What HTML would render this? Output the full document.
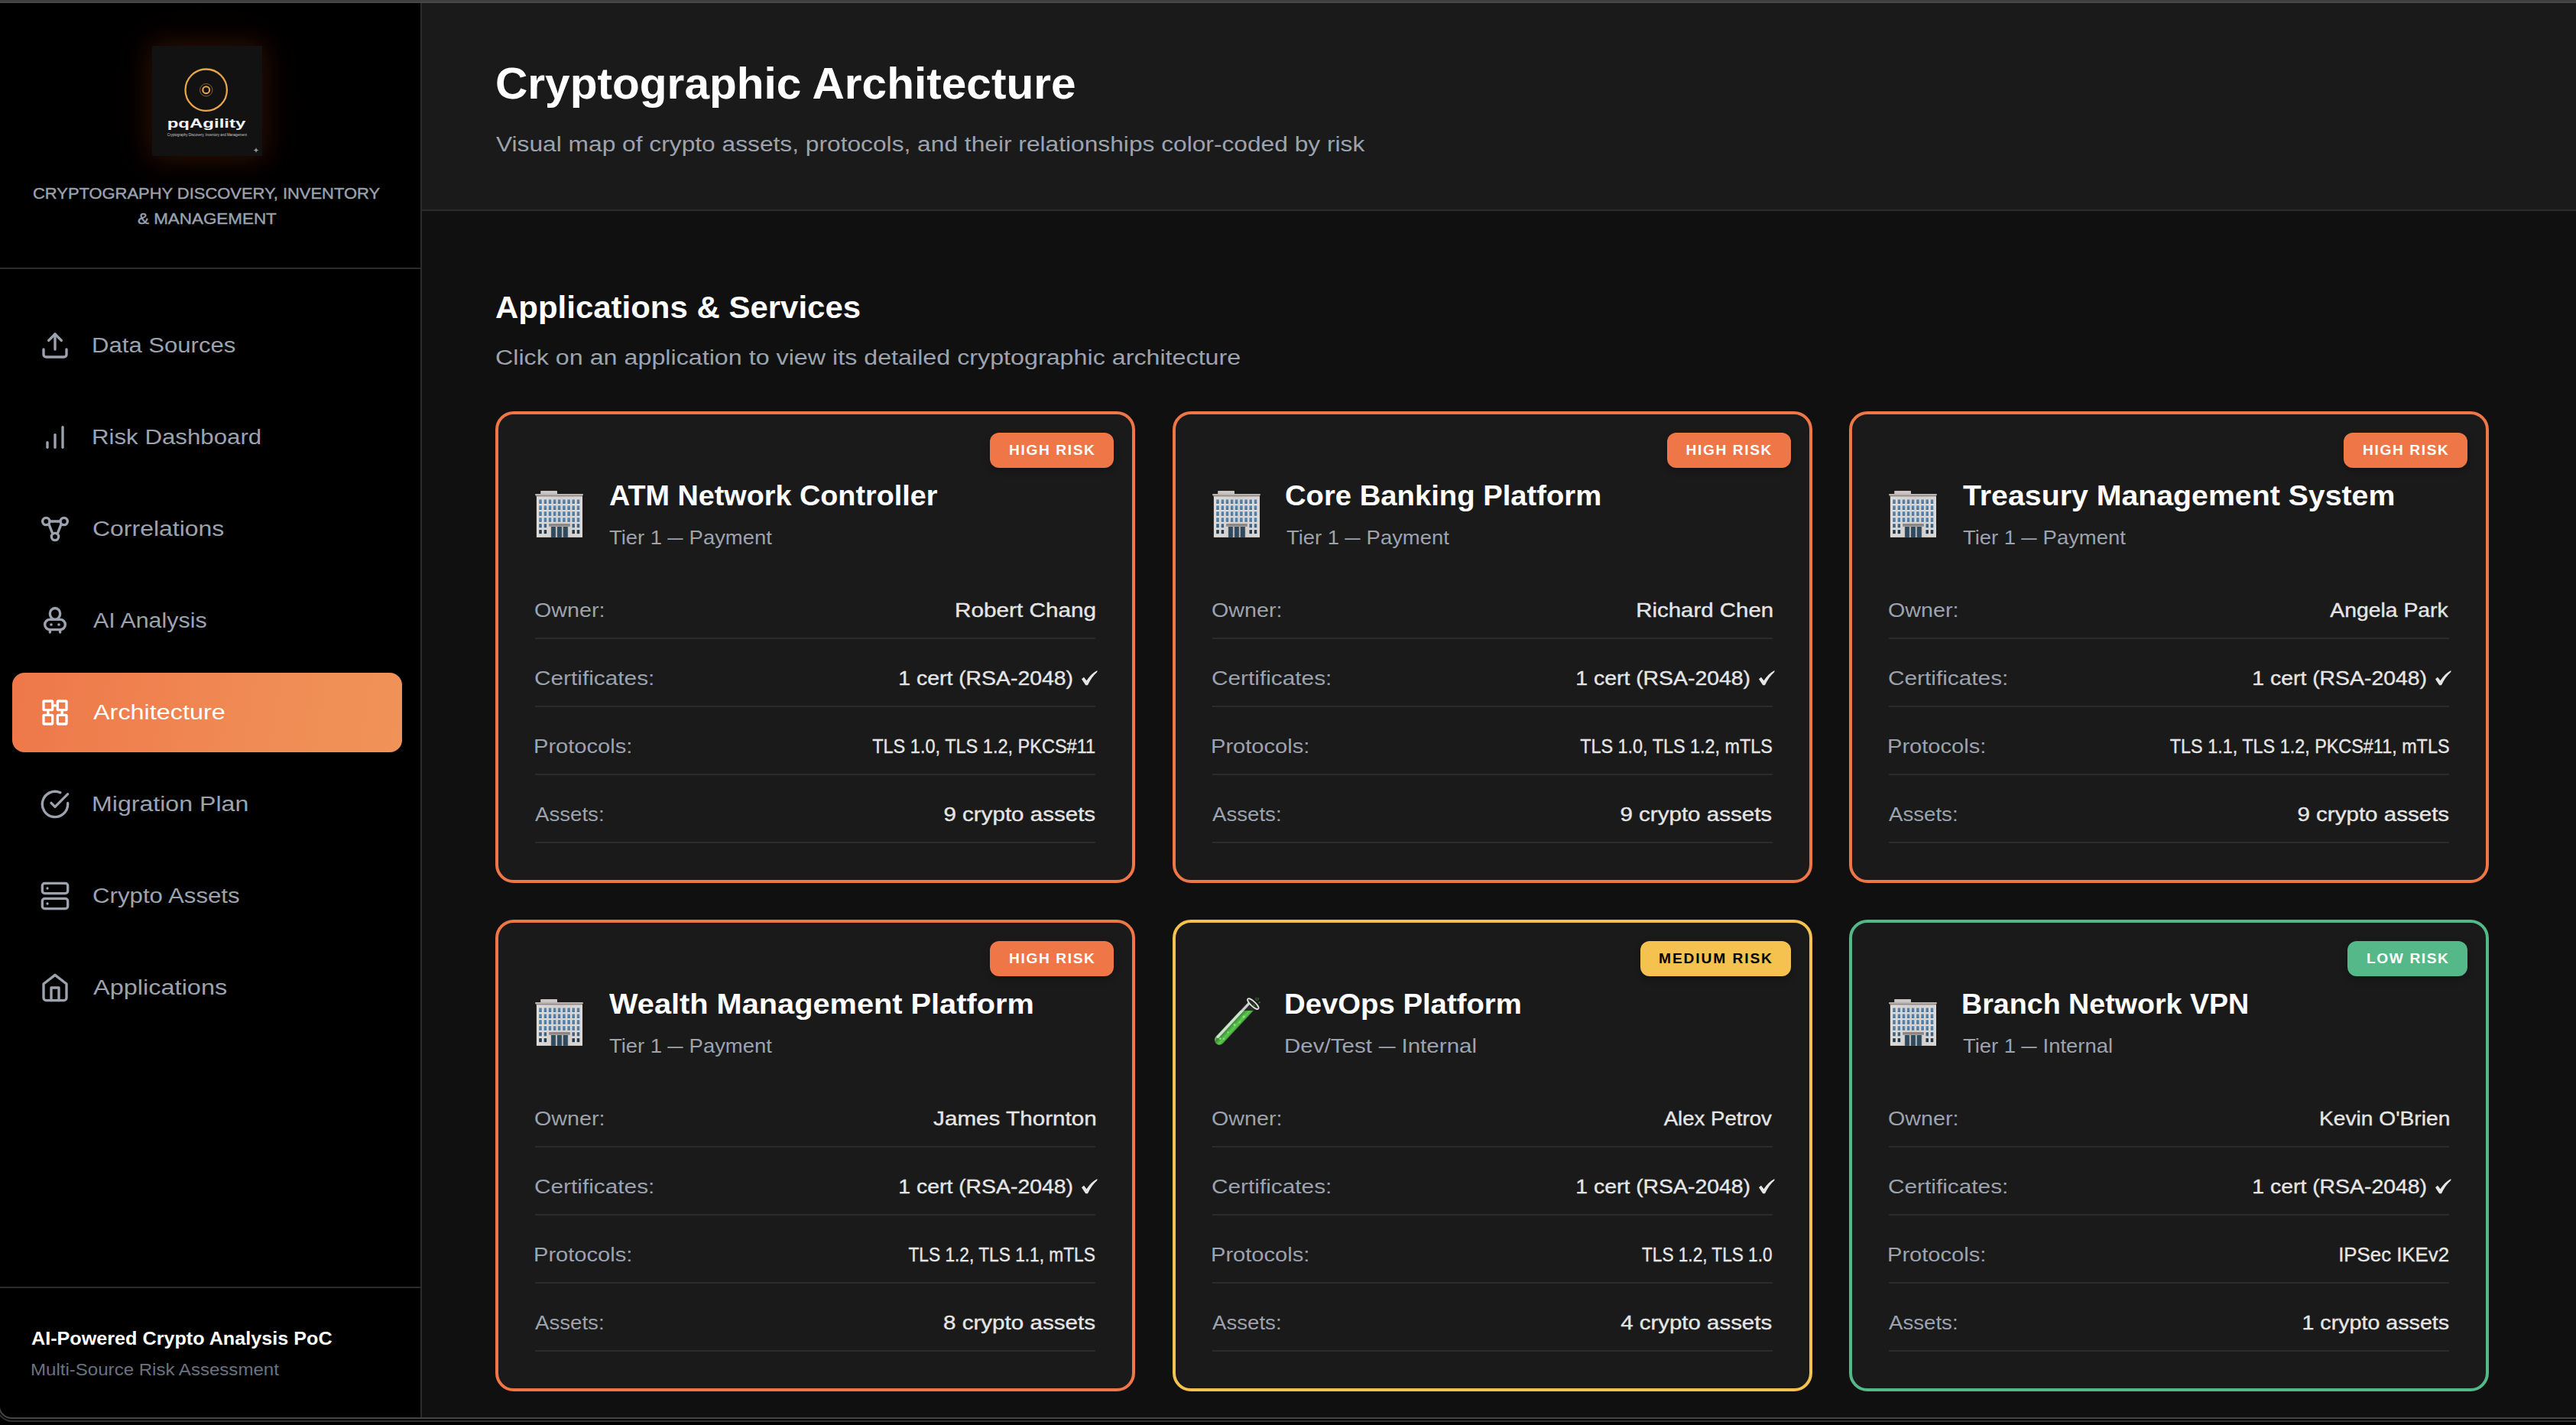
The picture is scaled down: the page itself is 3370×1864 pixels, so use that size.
<!DOCTYPE html>
<html lang="en"><head><meta charset="utf-8"><title>pqAgility — Cryptographic Architecture</title><style>:root{--u:calc(100vw/3370)}
*{box-sizing:border-box}
html,body{margin:0;padding:0;background:#000}
html{overflow:hidden}
body{width:calc(3370*var(--u));height:calc(1864*var(--u));overflow:hidden;font-family:"Liberation Sans",sans-serif;-webkit-font-smoothing:antialiased}
.win{position:relative;width:calc(3370*var(--u));height:calc(1864*var(--u));overflow:hidden;background:#000}
.t{position:absolute;white-space:nowrap;display:block;margin:0;padding:0}
.tag{-webkit-text-stroke:calc(.4*var(--u)) currentColor}
.val{-webkit-text-stroke:calc(.35*var(--u)) currentColor}
.topbar{position:absolute;left:0;top:0;width:calc(3370*var(--u));height:calc(4*var(--u));background:linear-gradient(#3e3e3e 0%,#404040 45%,#4b4d4c 100%)}
.sidebar{position:absolute;left:0;top:calc(4*var(--u));width:calc(552*var(--u));height:calc(1850*var(--u));background:#000;border-right:calc(2*var(--u)) solid #2b2b2b;border-bottom-left-radius:calc(16*var(--u));overflow:hidden}
.brand{position:absolute;left:0;top:0;width:calc(550*var(--u));height:calc(348*var(--u));border-bottom:calc(2*var(--u)) solid #2b2b2b}
.logo{position:absolute;left:calc(199*var(--u));top:calc(56*var(--u));width:calc(144*var(--u));height:calc(144*var(--u));box-shadow:0 0 calc(30*var(--u)) calc(4*var(--u)) rgba(150,60,16,.24),0 0 calc(70*var(--u)) calc(16*var(--u)) rgba(120,45,10,.09)}
.nav-item{position:absolute;left:calc(16*var(--u));width:calc(510*var(--u));height:calc(104*var(--u));border-radius:calc(16*var(--u));display:block;color:#9ca3af;text-decoration:none}
.nav-item.active{background:linear-gradient(100deg,#ee7749 0%,#f08a55 60%,#f09358 100%);color:#fff}
.ico{position:absolute;left:calc(36*var(--u));top:calc(32*var(--u));width:calc(40*var(--u));height:calc(40*var(--u))}
.foot{position:absolute;left:0;top:calc(1679*var(--u));width:calc(550*var(--u));height:calc(171*var(--u));border-top:calc(2*var(--u)) solid #2b2b2b}
.main{position:absolute;left:calc(552*var(--u));top:calc(4*var(--u));width:calc(2818*var(--u));height:calc(1850*var(--u));background:#101010;overflow:hidden}
.top{position:absolute;left:0;top:0;width:calc(2818*var(--u));height:calc(272*var(--u));background:#1a1a1a;border-bottom:calc(2*var(--u)) solid #2b2b2b}
.content{position:absolute;left:0;top:calc(272*var(--u));width:calc(2818*var(--u));height:calc(1578*var(--u))}
.card{position:absolute;width:calc(837*var(--u));height:calc(617*var(--u));border:calc(4*var(--u)) solid;border-radius:calc(24*var(--u));background:#1a1a1a}
.badge{position:absolute;right:calc(24*var(--u));top:calc(24*var(--u));height:calc(46*var(--u));border-radius:calc(12*var(--u));display:flex;align-items:center;justify-content:center;font-weight:700;font-size:calc(19.2*var(--u));box-shadow:0 calc(4*var(--u)) calc(10*var(--u)) rgba(0,0,0,.25)}
.bt{display:inline-block;white-space:nowrap}
.d{display:inline-block;transform:scaleX(.74);margin:0 -.13em}
.emo-wrap{position:absolute;left:calc(48*var(--u));top:calc(98*var(--u));width:calc(64*var(--u));height:calc(64*var(--u))}
.emo{width:calc(64*var(--u));height:calc(64*var(--u));display:block}
.chk{position:absolute;width:calc(20.4*var(--u));height:calc(19.2*var(--u));overflow:visible}
.div{position:absolute;left:calc(48*var(--u));right:calc(48*var(--u));height:calc(2*var(--u));background:#2b2b2b;display:block}
.frame1{position:absolute;left:calc(-2*var(--u));top:calc(1700*var(--u));width:calc(3500*var(--u));height:calc(156*var(--u));border:calc(2*var(--u)) solid #444;border-top:none;border-right:none;border-bottom-left-radius:calc(17*var(--u));pointer-events:none}
.frame2{position:absolute;left:calc(-5.5*var(--u));top:calc(1700*var(--u));width:calc(3500*var(--u));height:calc(160*var(--u));border:calc(2.5*var(--u)) solid #303232;border-top:none;border-right:none;border-bottom-left-radius:calc(21*var(--u));pointer-events:none}
</style></head><body><div class="win">
<div class="topbar"></div>
<aside class="sidebar"><div class="brand"><svg class="logo" viewBox="0 0 144 144"><rect width="144" height="144" fill="#121212"></rect><circle cx="70.7" cy="57.7" r="27.2" fill="none" stroke="#e8a548" stroke-width="2.3"></circle><circle cx="70.7" cy="57.7" r="8.2" fill="none" stroke="#b98339" stroke-width=".7"></circle><circle cx="70.7" cy="57.7" r="4.4" fill="none" stroke="#e8a548" stroke-width="2.1"></circle><text x="19.7" y="107.4" font-family="Liberation Sans, sans-serif" font-size="16.6" font-weight="700" fill="#f4f4f4" textLength="102.7" lengthAdjust="spacingAndGlyphs">pqAgility</text><text x="19.7" y="117.6" font-family="Liberation Sans, sans-serif" font-size="4.6" fill="#c9c9c9" textLength="104.3" lengthAdjust="spacingAndGlyphs">Cryptography Discovery, Inventory and Management</text><path d="M136 133 l1 2.4 2.4 1 -2.4 1 -1 2.4 -1 -2.4 -2.4 -1 2.4 -1z" fill="#9a9a9a"></path></svg>
<span class="t tag" style="left: calc(42.9*var(--u)); top: calc(235*var(--u)); font-size: calc(21*var(--u)); line-height: calc(27*var(--u)); color: rgb(156, 163, 175); font-weight: 400; transform: scaleX(1.044); transform-origin: calc(0*var(--u)) 50%;">CRYPTOGRAPHY DISCOVERY, INVENTORY</span>
<span class="t tag" style="left: calc(179.6*var(--u)); top: calc(268.3*var(--u)); font-size: calc(21*var(--u)); line-height: calc(27*var(--u)); color: rgb(156, 163, 175); font-weight: 400; transform: scaleX(1.067); transform-origin: calc(0*var(--u)) 50%;">&amp; MANAGEMENT</span>
</div><nav><a class="nav-item" style="top:calc(396*var(--u))"><svg class="ico" viewBox="0 0 24 24" fill="none" stroke="currentColor" stroke-width="2" stroke-linecap="round" stroke-linejoin="round"><path d="M21 15v4a2 2 0 0 1-2 2H5a2 2 0 0 1-2-2v-4"></path><polyline points="17 8 12 3 7 8"></polyline><line x1="12" y1="3" x2="12" y2="15"></line></svg><span class="t " style="left: calc(103.7*var(--u)); top: calc(32.7*var(--u)); font-size: calc(28.4*var(--u)); line-height: calc(37*var(--u)); color: rgb(156, 163, 175); font-weight: 400; transform: scaleX(1.095); transform-origin: calc(0*var(--u)) 50%;">Data Sources</span></a>
<a class="nav-item" style="top:calc(516*var(--u))"><svg class="ico" viewBox="0 0 24 24" fill="none" stroke="currentColor" stroke-width="2" stroke-linecap="round" stroke-linejoin="round"><line x1="12" y1="20" x2="12" y2="10"></line><line x1="18" y1="20" x2="18" y2="4"></line><line x1="6" y1="20" x2="6" y2="16"></line></svg><span class="t " style="left: calc(103.7*var(--u)); top: calc(32.7*var(--u)); font-size: calc(28.4*var(--u)); line-height: calc(37*var(--u)); color: rgb(156, 163, 175); font-weight: 400; transform: scaleX(1.1); transform-origin: calc(0*var(--u)) 50%;">Risk Dashboard</span></a>
<a class="nav-item" style="top:calc(636*var(--u))"><svg class="ico" viewBox="0 0 24 24" fill="none" stroke="currentColor" stroke-width="2" stroke-linecap="round" stroke-linejoin="round"><circle cx="5" cy="6" r="2.8"></circle><circle cx="19" cy="6" r="2.8"></circle><circle cx="12" cy="18" r="2.8"></circle><line x1="7.8" y1="6" x2="16.2" y2="6"></line><line x1="7.2" y1="8.3" x2="10.2" y2="15.8"></line><line x1="16.8" y1="8.3" x2="13.8" y2="15.8"></line></svg><span class="t " style="left: calc(104.8*var(--u)); top: calc(32.7*var(--u)); font-size: calc(28.4*var(--u)); line-height: calc(37*var(--u)); color: rgb(156, 163, 175); font-weight: 400; transform: scaleX(1.126); transform-origin: calc(0*var(--u)) 50%;">Correlations</span></a>
<a class="nav-item" style="top:calc(756*var(--u))"><svg class="ico" viewBox="0 0 24 24" fill="none" stroke="currentColor" stroke-width="2" stroke-linecap="round" stroke-linejoin="round"><rect x="4" y="11" width="16" height="8" rx="4"></rect><ellipse cx="12" cy="6.5" rx="4" ry="4.4" fill="#000"></ellipse><line x1="8" y1="19" x2="8" y2="21"></line><line x1="16" y1="19" x2="16" y2="21"></line><circle cx="9" cy="15" r="1.1" fill="currentColor" stroke="none"></circle><circle cx="15" cy="15" r="1.1" fill="currentColor" stroke="none"></circle></svg><span class="t " style="left: calc(105.9*var(--u)); top: calc(32.7*var(--u)); font-size: calc(28.4*var(--u)); line-height: calc(37*var(--u)); color: rgb(156, 163, 175); font-weight: 400; transform: scaleX(1.07); transform-origin: calc(0*var(--u)) 50%;">AI Analysis</span></a>
<a class="nav-item active" style="top:calc(876*var(--u))"><svg class="ico" viewBox="0 0 24 24" fill="none" stroke="currentColor" stroke-width="2" stroke-linecap="round" stroke-linejoin="round"><rect x="3" y="3" width="7" height="7" rx=".6"></rect><rect x="14" y="3" width="7" height="7" rx=".6"></rect><rect x="3" y="14" width="7" height="7" rx=".6"></rect><rect x="14" y="14" width="7" height="7" rx=".6"></rect><line x1="10" y1="6.5" x2="14" y2="6.5"></line><line x1="6.5" y1="10" x2="6.5" y2="14"></line><line x1="17.5" y1="10" x2="17.5" y2="14"></line></svg><span class="t " style="left: calc(105.9*var(--u)); top: calc(32.7*var(--u)); font-size: calc(28.4*var(--u)); line-height: calc(37*var(--u)); color: rgb(255, 255, 255); font-weight: 400; transform: scaleX(1.141); transform-origin: calc(0*var(--u)) 50%;">Architecture</span></a>
<a class="nav-item" style="top:calc(996*var(--u))"><svg class="ico" viewBox="0 0 24 24" fill="none" stroke="currentColor" stroke-width="2" stroke-linecap="round" stroke-linejoin="round"><path d="M22 11.08V12a10 10 0 1 1-5.93-9.14"></path><polyline points="22 4 12 14.01 9 11.01"></polyline></svg><span class="t " style="left: calc(103.6*var(--u)); top: calc(32.7*var(--u)); font-size: calc(28.4*var(--u)); line-height: calc(37*var(--u)); color: rgb(156, 163, 175); font-weight: 400; transform: scaleX(1.131); transform-origin: calc(0*var(--u)) 50%;">Migration Plan</span></a>
<a class="nav-item" style="top:calc(1116*var(--u))"><svg class="ico" viewBox="0 0 24 24" fill="none" stroke="currentColor" stroke-width="2" stroke-linecap="round" stroke-linejoin="round"><rect x="2" y="2" width="20" height="8" rx="2" ry="2"></rect><rect x="2" y="14" width="20" height="8" rx="2" ry="2"></rect><line x1="6" y1="6" x2="6.01" y2="6"></line><line x1="6" y1="18" x2="6.01" y2="18"></line></svg><span class="t " style="left: calc(104.8*var(--u)); top: calc(32.7*var(--u)); font-size: calc(28.4*var(--u)); line-height: calc(37*var(--u)); color: rgb(156, 163, 175); font-weight: 400; transform: scaleX(1.1); transform-origin: calc(0*var(--u)) 50%;">Crypto Assets</span></a>
<a class="nav-item" style="top:calc(1236*var(--u))"><svg class="ico" viewBox="0 0 24 24" fill="none" stroke="currentColor" stroke-width="2" stroke-linecap="round" stroke-linejoin="round"><path d="M3 9l9-7 9 7v11a2 2 0 0 1-2 2H5a2 2 0 0 1-2-2z"></path><polyline points="9 22 9 12 15 12 15 22"></polyline></svg><span class="t " style="left: calc(105.9*var(--u)); top: calc(32.7*var(--u)); font-size: calc(28.4*var(--u)); line-height: calc(37*var(--u)); color: rgb(156, 163, 175); font-weight: 400; transform: scaleX(1.145); transform-origin: calc(0*var(--u)) 50%;">Applications</span></a></nav>
<div class="foot"><span class="t " style="left: calc(40.9*var(--u)); top: calc(50.1*var(--u)); font-size: calc(24*var(--u)); line-height: calc(31*var(--u)); color: rgb(255, 255, 255); font-weight: 700; transform: scaleX(1.049); transform-origin: calc(0*var(--u)) 50%;">AI-Powered Crypto Analysis PoC</span><span class="t " style="left: calc(39.8*var(--u)); top: calc(92.5*var(--u)); font-size: calc(21.5*var(--u)); line-height: calc(28*var(--u)); color: rgb(107, 114, 128); font-weight: 400; transform: scaleX(1.119); transform-origin: calc(0*var(--u)) 50%;">Multi-Source Risk Assessment</span></div></aside>
<main class="main"><header class="top">
<h1 class="t h1" style="left: calc(95.5*var(--u)); top: calc(68.7*var(--u)); font-size: calc(56.5*var(--u)); line-height: calc(73*var(--u)); color: rgb(255, 255, 255); font-weight: 700; transform: scaleX(1.037); transform-origin: calc(0*var(--u)) 50%;">Cryptographic Architecture</h1>
<p class="t " style="left: calc(97*var(--u)); top: calc(165.6*var(--u)); font-size: calc(28.4*var(--u)); line-height: calc(37*var(--u)); color: rgb(156, 163, 175); font-weight: 400; transform: scaleX(1.117); transform-origin: calc(0*var(--u)) 50%;">Visual map of crypto assets, protocols, and their relationships color-coded by risk</p>
</header><section class="content">
<h2 class="t h2" style="left: calc(96.3*var(--u)); top: calc(100*var(--u)); font-size: calc(40*var(--u)); line-height: calc(52*var(--u)); color: rgb(255, 255, 255); font-weight: 700; transform: scaleX(1.049); transform-origin: calc(0*var(--u)) 50%;">Applications &amp; Services</h2>
<p class="t " style="left: calc(95.9*var(--u)); top: calc(173.4*var(--u)); font-size: calc(28.4*var(--u)); line-height: calc(37*var(--u)); color: rgb(156, 163, 175); font-weight: 400; transform: scaleX(1.136); transform-origin: calc(0*var(--u)) 50%;">Click on an application to view its detailed cryptographic architecture</p>
<article class="card" style="left:calc(96.0*var(--u));top:calc(262*var(--u));border-color:#ef7647"><span class="badge" style="background:#ef7647;color:#fff;width:calc(162*var(--u))"><span class="bt" style="letter-spacing: calc(1.59*var(--u)); margin-right: calc(-1.59*var(--u));">HIGH RISK</span></span><div class="emo-wrap"><svg class="emo" viewBox="0 0 64 64"><defs><linearGradient id="bw" x1="0" y1="0" x2="0" y2="1"><stop offset="0" stop-color="#5c88b0"></stop><stop offset="1" stop-color="#4b7499"></stop></linearGradient><linearGradient id="bb" x1="0" y1="0" x2="1" y2="0"><stop offset="0" stop-color="#dedad8"></stop><stop offset=".5" stop-color="#d2cdcb"></stop><stop offset="1" stop-color="#dbd7d5"></stop></linearGradient></defs><rect x="7.2" y="2.1" width="21.8" height="4.6" rx=".6" fill="#cbc6c4"></rect><rect x="1.9" y="8.6" width="60.1" height="54.3" fill="url(#bb)"></rect><rect x="0.1" y="6.1" width="62.8" height="2.2" rx=".8" fill="#b9b3b1"></rect><rect x="1.2" y="8.1" width="60.8" height="1.3" fill="#8f8987"></rect><rect x="4.7" y="12.8" width="4.6" height="6.7" rx=".5" fill="#eef1f3" opacity=".75"></rect><rect x="5.2" y="13.3" width="3.6" height="5.7" fill="url(#bw)"></rect><rect x="11.1" y="12.8" width="4.6" height="6.7" rx=".5" fill="#eef1f3" opacity=".75"></rect><rect x="11.6" y="13.3" width="3.6" height="5.7" fill="url(#bw)"></rect><rect x="17.2" y="12.8" width="4.6" height="6.7" rx=".5" fill="#eef1f3" opacity=".75"></rect><rect x="17.7" y="13.3" width="3.6" height="5.7" fill="url(#bw)"></rect><rect x="23.3" y="12.8" width="4.6" height="6.7" rx=".5" fill="#eef1f3" opacity=".75"></rect><rect x="23.8" y="13.3" width="3.6" height="5.7" fill="url(#bw)"></rect><rect x="29.3" y="12.8" width="4.6" height="6.7" rx=".5" fill="#eef1f3" opacity=".75"></rect><rect x="29.8" y="13.3" width="3.6" height="5.7" fill="url(#bw)"></rect><rect x="35.6" y="12.8" width="4.6" height="6.7" rx=".5" fill="#eef1f3" opacity=".75"></rect><rect x="36.1" y="13.3" width="3.6" height="5.7" fill="url(#bw)"></rect><rect x="41.8" y="12.8" width="4.6" height="6.7" rx=".5" fill="#eef1f3" opacity=".75"></rect><rect x="42.3" y="13.3" width="3.6" height="5.7" fill="url(#bw)"></rect><rect x="47.9" y="12.8" width="4.6" height="6.7" rx=".5" fill="#eef1f3" opacity=".75"></rect><rect x="48.4" y="13.3" width="3.6" height="5.7" fill="url(#bw)"></rect><rect x="54.2" y="12.8" width="4.6" height="6.7" rx=".5" fill="#eef1f3" opacity=".75"></rect><rect x="54.7" y="13.3" width="3.6" height="5.7" fill="url(#bw)"></rect><rect x="4.7" y="20.8" width="4.6" height="6.7" rx=".5" fill="#eef1f3" opacity=".75"></rect><rect x="5.2" y="21.3" width="3.6" height="5.7" fill="url(#bw)"></rect><rect x="11.1" y="20.8" width="4.6" height="6.7" rx=".5" fill="#eef1f3" opacity=".75"></rect><rect x="11.6" y="21.3" width="3.6" height="5.7" fill="url(#bw)"></rect><rect x="17.2" y="20.8" width="4.6" height="6.7" rx=".5" fill="#eef1f3" opacity=".75"></rect><rect x="17.7" y="21.3" width="3.6" height="5.7" fill="url(#bw)"></rect><rect x="23.3" y="20.8" width="4.6" height="6.7" rx=".5" fill="#eef1f3" opacity=".75"></rect><rect x="23.8" y="21.3" width="3.6" height="5.7" fill="url(#bw)"></rect><rect x="29.3" y="20.8" width="4.6" height="6.7" rx=".5" fill="#eef1f3" opacity=".75"></rect><rect x="29.8" y="21.3" width="3.6" height="5.7" fill="url(#bw)"></rect><rect x="35.6" y="20.8" width="4.6" height="6.7" rx=".5" fill="#eef1f3" opacity=".75"></rect><rect x="36.1" y="21.3" width="3.6" height="5.7" fill="url(#bw)"></rect><rect x="41.8" y="20.8" width="4.6" height="6.7" rx=".5" fill="#eef1f3" opacity=".75"></rect><rect x="42.3" y="21.3" width="3.6" height="5.7" fill="url(#bw)"></rect><rect x="47.9" y="20.8" width="4.6" height="6.7" rx=".5" fill="#eef1f3" opacity=".75"></rect><rect x="48.4" y="21.3" width="3.6" height="5.7" fill="url(#bw)"></rect><rect x="54.2" y="20.8" width="4.6" height="6.7" rx=".5" fill="#eef1f3" opacity=".75"></rect><rect x="54.7" y="21.3" width="3.6" height="5.7" fill="url(#bw)"></rect><rect x="4.7" y="28.6" width="4.6" height="6.7" rx=".5" fill="#eef1f3" opacity=".75"></rect><rect x="5.2" y="29.1" width="3.6" height="5.7" fill="url(#bw)"></rect><rect x="11.1" y="28.6" width="4.6" height="6.7" rx=".5" fill="#eef1f3" opacity=".75"></rect><rect x="11.6" y="29.1" width="3.6" height="5.7" fill="url(#bw)"></rect><rect x="17.2" y="28.6" width="4.6" height="6.7" rx=".5" fill="#eef1f3" opacity=".75"></rect><rect x="17.7" y="29.1" width="3.6" height="5.7" fill="url(#bw)"></rect><rect x="23.3" y="28.6" width="4.6" height="6.7" rx=".5" fill="#eef1f3" opacity=".75"></rect><rect x="23.8" y="29.1" width="3.6" height="5.7" fill="url(#bw)"></rect><rect x="29.3" y="28.6" width="4.6" height="6.7" rx=".5" fill="#eef1f3" opacity=".75"></rect><rect x="29.8" y="29.1" width="3.6" height="5.7" fill="url(#bw)"></rect><rect x="35.6" y="28.6" width="4.6" height="6.7" rx=".5" fill="#eef1f3" opacity=".75"></rect><rect x="36.1" y="29.1" width="3.6" height="5.7" fill="url(#bw)"></rect><rect x="41.8" y="28.6" width="4.6" height="6.7" rx=".5" fill="#eef1f3" opacity=".75"></rect><rect x="42.3" y="29.1" width="3.6" height="5.7" fill="url(#bw)"></rect><rect x="47.9" y="28.6" width="4.6" height="6.7" rx=".5" fill="#eef1f3" opacity=".75"></rect><rect x="48.4" y="29.1" width="3.6" height="5.7" fill="url(#bw)"></rect><rect x="54.2" y="28.6" width="4.6" height="6.7" rx=".5" fill="#eef1f3" opacity=".75"></rect><rect x="54.7" y="29.1" width="3.6" height="5.7" fill="url(#bw)"></rect><rect x="4.7" y="36.6" width="4.6" height="6.7" rx=".5" fill="#eef1f3" opacity=".75"></rect><rect x="5.2" y="37.1" width="3.6" height="5.7" fill="url(#bw)"></rect><rect x="11.1" y="36.6" width="4.6" height="6.7" rx=".5" fill="#eef1f3" opacity=".75"></rect><rect x="11.6" y="37.1" width="3.6" height="5.7" fill="url(#bw)"></rect><rect x="17.2" y="36.6" width="4.6" height="6.7" rx=".5" fill="#eef1f3" opacity=".75"></rect><rect x="17.7" y="37.1" width="3.6" height="5.7" fill="url(#bw)"></rect><rect x="23.3" y="36.6" width="4.6" height="6.7" rx=".5" fill="#eef1f3" opacity=".75"></rect><rect x="23.8" y="37.1" width="3.6" height="5.7" fill="url(#bw)"></rect><rect x="29.3" y="36.6" width="4.6" height="6.7" rx=".5" fill="#eef1f3" opacity=".75"></rect><rect x="29.8" y="37.1" width="3.6" height="5.7" fill="url(#bw)"></rect><rect x="35.6" y="36.6" width="4.6" height="6.7" rx=".5" fill="#eef1f3" opacity=".75"></rect><rect x="36.1" y="37.1" width="3.6" height="5.7" fill="url(#bw)"></rect><rect x="41.8" y="36.6" width="4.6" height="6.7" rx=".5" fill="#eef1f3" opacity=".75"></rect><rect x="42.3" y="37.1" width="3.6" height="5.7" fill="url(#bw)"></rect><rect x="47.9" y="36.6" width="4.6" height="6.7" rx=".5" fill="#eef1f3" opacity=".75"></rect><rect x="48.4" y="37.1" width="3.6" height="5.7" fill="url(#bw)"></rect><rect x="54.2" y="36.6" width="4.6" height="6.7" rx=".5" fill="#eef1f3" opacity=".75"></rect><rect x="54.7" y="37.1" width="3.6" height="5.7" fill="url(#bw)"></rect><rect x="4.7" y="44.7" width="4.6" height="6.1" rx=".5" fill="#eef1f3" opacity=".75"></rect><rect x="5.2" y="45.2" width="3.6" height="5.1" fill="#3f6383"></rect><rect x="11.1" y="44.7" width="4.6" height="6.1" rx=".5" fill="#eef1f3" opacity=".75"></rect><rect x="11.6" y="45.2" width="3.6" height="5.1" fill="#3f6383"></rect><rect x="47.9" y="44.7" width="4.6" height="6.1" rx=".5" fill="#eef1f3" opacity=".75"></rect><rect x="48.4" y="45.2" width="3.6" height="5.1" fill="#3f6383"></rect><rect x="54.2" y="44.7" width="4.6" height="6.1" rx=".5" fill="#eef1f3" opacity=".75"></rect><rect x="54.7" y="45.2" width="3.6" height="5.1" fill="#3f6383"></rect><rect x="4.7" y="52.6" width="4.6" height="6.1" rx=".5" fill="#eef1f3" opacity=".75"></rect><rect x="5.2" y="53.1" width="3.6" height="5.1" fill="#22384b"></rect><rect x="11.1" y="52.6" width="4.6" height="6.1" rx=".5" fill="#eef1f3" opacity=".75"></rect><rect x="11.6" y="53.1" width="3.6" height="5.1" fill="#22384b"></rect><rect x="47.9" y="52.6" width="4.6" height="6.1" rx=".5" fill="#eef1f3" opacity=".75"></rect><rect x="48.4" y="53.1" width="3.6" height="5.1" fill="#22384b"></rect><rect x="54.2" y="52.6" width="4.6" height="6.1" rx=".5" fill="#eef1f3" opacity=".75"></rect><rect x="54.7" y="53.1" width="3.6" height="5.1" fill="#22384b"></rect><rect x="18.1" y="45" width="27.8" height="3.8" rx=".5" fill="#8c8684"></rect><rect x="20.4" y="48.8" width="23.2" height="14.1" fill="#bdb8b6"></rect><rect x="21.1" y="49" width="5.75" height="13.9" fill="#2e4a5f"></rect><rect x="29.06" y="49" width="5.78" height="13.9" fill="#2e4a5f"></rect><rect x="36.8" y="49" width="6.00" height="13.9" fill="#2e4a5f"></rect></svg></div><h3 class="t ctitle" style="left: calc(144.8*var(--u)); top: calc(82.9*var(--u)); font-size: calc(36*var(--u)); line-height: calc(47*var(--u)); color: rgb(255, 255, 255); font-weight: 700; transform: scaleX(1.049); transform-origin: calc(0*var(--u)) 50%;">ATM Network Controller</h3><p class="t csub" style="left: calc(145.1*var(--u)); top: calc(144*var(--u)); font-size: calc(26.4*var(--u)); line-height: calc(34*var(--u)); color: rgb(156, 163, 175); font-weight: 400; transform: scaleX(1.039); transform-origin: calc(0*var(--u)) 50%;">Tier 1 <span class="d">—</span> Payment</p><div class="row"><span class="t lab" style="left: calc(47.3*var(--u)); top: calc(239.3*var(--u)); font-size: calc(26.2*var(--u)); line-height: calc(34*var(--u)); color: rgb(156, 163, 175); font-weight: 400; transform: scaleX(1.095); transform-origin: calc(0*var(--u)) 50%;">Owner:</span><span class="t val" style="right: calc(46.5*var(--u)); top: calc(239.3*var(--u)); font-size: calc(26.2*var(--u)); line-height: calc(34*var(--u)); color: rgb(229, 229, 229); font-weight: 400; transform: scaleX(1.135); transform-origin: 100% 50%;">Robert Chang</span><i class="div" style="top:calc(292*var(--u))"></i></div><div class="row"><span class="t lab" style="left: calc(47.3*var(--u)); top: calc(328.3*var(--u)); font-size: calc(26.2*var(--u)); line-height: calc(34*var(--u)); color: rgb(156, 163, 175); font-weight: 400; transform: scaleX(1.138); transform-origin: calc(0*var(--u)) 50%;">Certificates:</span><span class="t val" style="right: calc(76.8*var(--u)); top: calc(328.3*var(--u)); font-size: calc(26.2*var(--u)); line-height: calc(34*var(--u)); color: rgb(229, 229, 229); font-weight: 400; transform: scaleX(1.084); transform-origin: 100% 50%;">1 cert (RSA-2048)</span><svg class="chk" viewBox="0 0 20.4 19.2" style="left:calc(763*var(--u));top:calc(335.1*var(--u))"><path d="M0 11.3 L3 8.8 L6.5 13.2 C10.2 7.6 15 2.7 20.4 0 L20.4 2.1 C15.6 6.4 11.2 12.4 8 19.2 L5.2 19.2 Z" fill="#e5e5e5"></path><title>✓</title></svg><i class="div" style="top:calc(381*var(--u))"></i></div><div class="row"><span class="t lab" style="left: calc(46.2*var(--u)); top: calc(417.3*var(--u)); font-size: calc(26.2*var(--u)); line-height: calc(34*var(--u)); color: rgb(156, 163, 175); font-weight: 400; transform: scaleX(1.111); transform-origin: calc(0*var(--u)) 50%;">Protocols:</span><span class="t val" style="right: calc(47.8*var(--u)); top: calc(417.3*var(--u)); font-size: calc(26.2*var(--u)); line-height: calc(34*var(--u)); color: rgb(229, 229, 229); font-weight: 400; transform: scaleX(0.898); transform-origin: 100% 50%;">TLS 1.0, TLS 1.2, PKCS#11</span><i class="div" style="top:calc(470*var(--u))"></i></div><div class="row"><span class="t lab" style="left: calc(48.4*var(--u)); top: calc(506.3*var(--u)); font-size: calc(26.2*var(--u)); line-height: calc(34*var(--u)); color: rgb(156, 163, 175); font-weight: 400; transform: scaleX(1.055); transform-origin: calc(0*var(--u)) 50%;">Assets:</span><span class="t val" style="right: calc(48.2*var(--u)); top: calc(506.3*var(--u)); font-size: calc(26.2*var(--u)); line-height: calc(34*var(--u)); color: rgb(229, 229, 229); font-weight: 400; transform: scaleX(1.128); transform-origin: 100% 50%;">9 crypto assets</span><i class="div" style="top:calc(559*var(--u))"></i></div></article>
<article class="card" style="left:calc(981.5*var(--u));top:calc(262*var(--u));border-color:#ef7647"><span class="badge" style="background:#ef7647;color:#fff;width:calc(162*var(--u))"><span class="bt" style="letter-spacing: calc(1.59*var(--u)); margin-right: calc(-1.59*var(--u));">HIGH RISK</span></span><div class="emo-wrap"><svg class="emo" viewBox="0 0 64 64"><defs><linearGradient id="bw" x1="0" y1="0" x2="0" y2="1"><stop offset="0" stop-color="#5c88b0"></stop><stop offset="1" stop-color="#4b7499"></stop></linearGradient><linearGradient id="bb" x1="0" y1="0" x2="1" y2="0"><stop offset="0" stop-color="#dedad8"></stop><stop offset=".5" stop-color="#d2cdcb"></stop><stop offset="1" stop-color="#dbd7d5"></stop></linearGradient></defs><rect x="7.2" y="2.1" width="21.8" height="4.6" rx=".6" fill="#cbc6c4"></rect><rect x="1.9" y="8.6" width="60.1" height="54.3" fill="url(#bb)"></rect><rect x="0.1" y="6.1" width="62.8" height="2.2" rx=".8" fill="#b9b3b1"></rect><rect x="1.2" y="8.1" width="60.8" height="1.3" fill="#8f8987"></rect><rect x="4.7" y="12.8" width="4.6" height="6.7" rx=".5" fill="#eef1f3" opacity=".75"></rect><rect x="5.2" y="13.3" width="3.6" height="5.7" fill="url(#bw)"></rect><rect x="11.1" y="12.8" width="4.6" height="6.7" rx=".5" fill="#eef1f3" opacity=".75"></rect><rect x="11.6" y="13.3" width="3.6" height="5.7" fill="url(#bw)"></rect><rect x="17.2" y="12.8" width="4.6" height="6.7" rx=".5" fill="#eef1f3" opacity=".75"></rect><rect x="17.7" y="13.3" width="3.6" height="5.7" fill="url(#bw)"></rect><rect x="23.3" y="12.8" width="4.6" height="6.7" rx=".5" fill="#eef1f3" opacity=".75"></rect><rect x="23.8" y="13.3" width="3.6" height="5.7" fill="url(#bw)"></rect><rect x="29.3" y="12.8" width="4.6" height="6.7" rx=".5" fill="#eef1f3" opacity=".75"></rect><rect x="29.8" y="13.3" width="3.6" height="5.7" fill="url(#bw)"></rect><rect x="35.6" y="12.8" width="4.6" height="6.7" rx=".5" fill="#eef1f3" opacity=".75"></rect><rect x="36.1" y="13.3" width="3.6" height="5.7" fill="url(#bw)"></rect><rect x="41.8" y="12.8" width="4.6" height="6.7" rx=".5" fill="#eef1f3" opacity=".75"></rect><rect x="42.3" y="13.3" width="3.6" height="5.7" fill="url(#bw)"></rect><rect x="47.9" y="12.8" width="4.6" height="6.7" rx=".5" fill="#eef1f3" opacity=".75"></rect><rect x="48.4" y="13.3" width="3.6" height="5.7" fill="url(#bw)"></rect><rect x="54.2" y="12.8" width="4.6" height="6.7" rx=".5" fill="#eef1f3" opacity=".75"></rect><rect x="54.7" y="13.3" width="3.6" height="5.7" fill="url(#bw)"></rect><rect x="4.7" y="20.8" width="4.6" height="6.7" rx=".5" fill="#eef1f3" opacity=".75"></rect><rect x="5.2" y="21.3" width="3.6" height="5.7" fill="url(#bw)"></rect><rect x="11.1" y="20.8" width="4.6" height="6.7" rx=".5" fill="#eef1f3" opacity=".75"></rect><rect x="11.6" y="21.3" width="3.6" height="5.7" fill="url(#bw)"></rect><rect x="17.2" y="20.8" width="4.6" height="6.7" rx=".5" fill="#eef1f3" opacity=".75"></rect><rect x="17.7" y="21.3" width="3.6" height="5.7" fill="url(#bw)"></rect><rect x="23.3" y="20.8" width="4.6" height="6.7" rx=".5" fill="#eef1f3" opacity=".75"></rect><rect x="23.8" y="21.3" width="3.6" height="5.7" fill="url(#bw)"></rect><rect x="29.3" y="20.8" width="4.6" height="6.7" rx=".5" fill="#eef1f3" opacity=".75"></rect><rect x="29.8" y="21.3" width="3.6" height="5.7" fill="url(#bw)"></rect><rect x="35.6" y="20.8" width="4.6" height="6.7" rx=".5" fill="#eef1f3" opacity=".75"></rect><rect x="36.1" y="21.3" width="3.6" height="5.7" fill="url(#bw)"></rect><rect x="41.8" y="20.8" width="4.6" height="6.7" rx=".5" fill="#eef1f3" opacity=".75"></rect><rect x="42.3" y="21.3" width="3.6" height="5.7" fill="url(#bw)"></rect><rect x="47.9" y="20.8" width="4.6" height="6.7" rx=".5" fill="#eef1f3" opacity=".75"></rect><rect x="48.4" y="21.3" width="3.6" height="5.7" fill="url(#bw)"></rect><rect x="54.2" y="20.8" width="4.6" height="6.7" rx=".5" fill="#eef1f3" opacity=".75"></rect><rect x="54.7" y="21.3" width="3.6" height="5.7" fill="url(#bw)"></rect><rect x="4.7" y="28.6" width="4.6" height="6.7" rx=".5" fill="#eef1f3" opacity=".75"></rect><rect x="5.2" y="29.1" width="3.6" height="5.7" fill="url(#bw)"></rect><rect x="11.1" y="28.6" width="4.6" height="6.7" rx=".5" fill="#eef1f3" opacity=".75"></rect><rect x="11.6" y="29.1" width="3.6" height="5.7" fill="url(#bw)"></rect><rect x="17.2" y="28.6" width="4.6" height="6.7" rx=".5" fill="#eef1f3" opacity=".75"></rect><rect x="17.7" y="29.1" width="3.6" height="5.7" fill="url(#bw)"></rect><rect x="23.3" y="28.6" width="4.6" height="6.7" rx=".5" fill="#eef1f3" opacity=".75"></rect><rect x="23.8" y="29.1" width="3.6" height="5.7" fill="url(#bw)"></rect><rect x="29.3" y="28.6" width="4.6" height="6.7" rx=".5" fill="#eef1f3" opacity=".75"></rect><rect x="29.8" y="29.1" width="3.6" height="5.7" fill="url(#bw)"></rect><rect x="35.6" y="28.6" width="4.6" height="6.7" rx=".5" fill="#eef1f3" opacity=".75"></rect><rect x="36.1" y="29.1" width="3.6" height="5.7" fill="url(#bw)"></rect><rect x="41.8" y="28.6" width="4.6" height="6.7" rx=".5" fill="#eef1f3" opacity=".75"></rect><rect x="42.3" y="29.1" width="3.6" height="5.7" fill="url(#bw)"></rect><rect x="47.9" y="28.6" width="4.6" height="6.7" rx=".5" fill="#eef1f3" opacity=".75"></rect><rect x="48.4" y="29.1" width="3.6" height="5.7" fill="url(#bw)"></rect><rect x="54.2" y="28.6" width="4.6" height="6.7" rx=".5" fill="#eef1f3" opacity=".75"></rect><rect x="54.7" y="29.1" width="3.6" height="5.7" fill="url(#bw)"></rect><rect x="4.7" y="36.6" width="4.6" height="6.7" rx=".5" fill="#eef1f3" opacity=".75"></rect><rect x="5.2" y="37.1" width="3.6" height="5.7" fill="url(#bw)"></rect><rect x="11.1" y="36.6" width="4.6" height="6.7" rx=".5" fill="#eef1f3" opacity=".75"></rect><rect x="11.6" y="37.1" width="3.6" height="5.7" fill="url(#bw)"></rect><rect x="17.2" y="36.6" width="4.6" height="6.7" rx=".5" fill="#eef1f3" opacity=".75"></rect><rect x="17.7" y="37.1" width="3.6" height="5.7" fill="url(#bw)"></rect><rect x="23.3" y="36.6" width="4.6" height="6.7" rx=".5" fill="#eef1f3" opacity=".75"></rect><rect x="23.8" y="37.1" width="3.6" height="5.7" fill="url(#bw)"></rect><rect x="29.3" y="36.6" width="4.6" height="6.7" rx=".5" fill="#eef1f3" opacity=".75"></rect><rect x="29.8" y="37.1" width="3.6" height="5.7" fill="url(#bw)"></rect><rect x="35.6" y="36.6" width="4.6" height="6.7" rx=".5" fill="#eef1f3" opacity=".75"></rect><rect x="36.1" y="37.1" width="3.6" height="5.7" fill="url(#bw)"></rect><rect x="41.8" y="36.6" width="4.6" height="6.7" rx=".5" fill="#eef1f3" opacity=".75"></rect><rect x="42.3" y="37.1" width="3.6" height="5.7" fill="url(#bw)"></rect><rect x="47.9" y="36.6" width="4.6" height="6.7" rx=".5" fill="#eef1f3" opacity=".75"></rect><rect x="48.4" y="37.1" width="3.6" height="5.7" fill="url(#bw)"></rect><rect x="54.2" y="36.6" width="4.6" height="6.7" rx=".5" fill="#eef1f3" opacity=".75"></rect><rect x="54.7" y="37.1" width="3.6" height="5.7" fill="url(#bw)"></rect><rect x="4.7" y="44.7" width="4.6" height="6.1" rx=".5" fill="#eef1f3" opacity=".75"></rect><rect x="5.2" y="45.2" width="3.6" height="5.1" fill="#3f6383"></rect><rect x="11.1" y="44.7" width="4.6" height="6.1" rx=".5" fill="#eef1f3" opacity=".75"></rect><rect x="11.6" y="45.2" width="3.6" height="5.1" fill="#3f6383"></rect><rect x="47.9" y="44.7" width="4.6" height="6.1" rx=".5" fill="#eef1f3" opacity=".75"></rect><rect x="48.4" y="45.2" width="3.6" height="5.1" fill="#3f6383"></rect><rect x="54.2" y="44.7" width="4.6" height="6.1" rx=".5" fill="#eef1f3" opacity=".75"></rect><rect x="54.7" y="45.2" width="3.6" height="5.1" fill="#3f6383"></rect><rect x="4.7" y="52.6" width="4.6" height="6.1" rx=".5" fill="#eef1f3" opacity=".75"></rect><rect x="5.2" y="53.1" width="3.6" height="5.1" fill="#22384b"></rect><rect x="11.1" y="52.6" width="4.6" height="6.1" rx=".5" fill="#eef1f3" opacity=".75"></rect><rect x="11.6" y="53.1" width="3.6" height="5.1" fill="#22384b"></rect><rect x="47.9" y="52.6" width="4.6" height="6.1" rx=".5" fill="#eef1f3" opacity=".75"></rect><rect x="48.4" y="53.1" width="3.6" height="5.1" fill="#22384b"></rect><rect x="54.2" y="52.6" width="4.6" height="6.1" rx=".5" fill="#eef1f3" opacity=".75"></rect><rect x="54.7" y="53.1" width="3.6" height="5.1" fill="#22384b"></rect><rect x="18.1" y="45" width="27.8" height="3.8" rx=".5" fill="#8c8684"></rect><rect x="20.4" y="48.8" width="23.2" height="14.1" fill="#bdb8b6"></rect><rect x="21.1" y="49" width="5.75" height="13.9" fill="#2e4a5f"></rect><rect x="29.06" y="49" width="5.78" height="13.9" fill="#2e4a5f"></rect><rect x="36.8" y="49" width="6.00" height="13.9" fill="#2e4a5f"></rect></svg></div><h3 class="t ctitle" style="left: calc(143.7*var(--u)); top: calc(82.9*var(--u)); font-size: calc(36*var(--u)); line-height: calc(47*var(--u)); color: rgb(255, 255, 255); font-weight: 700; transform: scaleX(1.062); transform-origin: calc(0*var(--u)) 50%;">Core Banking Platform</h3><p class="t csub" style="left: calc(145.1*var(--u)); top: calc(144*var(--u)); font-size: calc(26.4*var(--u)); line-height: calc(34*var(--u)); color: rgb(156, 163, 175); font-weight: 400; transform: scaleX(1.039); transform-origin: calc(0*var(--u)) 50%;">Tier 1 <span class="d">—</span> Payment</p><div class="row"><span class="t lab" style="left: calc(47.3*var(--u)); top: calc(239.3*var(--u)); font-size: calc(26.2*var(--u)); line-height: calc(34*var(--u)); color: rgb(156, 163, 175); font-weight: 400; transform: scaleX(1.095); transform-origin: calc(0*var(--u)) 50%;">Owner:</span><span class="t val" style="right: calc(46.5*var(--u)); top: calc(239.3*var(--u)); font-size: calc(26.2*var(--u)); line-height: calc(34*var(--u)); color: rgb(229, 229, 229); font-weight: 400; transform: scaleX(1.124); transform-origin: 100% 50%;">Richard Chen</span><i class="div" style="top:calc(292*var(--u))"></i></div><div class="row"><span class="t lab" style="left: calc(47.3*var(--u)); top: calc(328.3*var(--u)); font-size: calc(26.2*var(--u)); line-height: calc(34*var(--u)); color: rgb(156, 163, 175); font-weight: 400; transform: scaleX(1.138); transform-origin: calc(0*var(--u)) 50%;">Certificates:</span><span class="t val" style="right: calc(76.8*var(--u)); top: calc(328.3*var(--u)); font-size: calc(26.2*var(--u)); line-height: calc(34*var(--u)); color: rgb(229, 229, 229); font-weight: 400; transform: scaleX(1.084); transform-origin: 100% 50%;">1 cert (RSA-2048)</span><svg class="chk" viewBox="0 0 20.4 19.2" style="left:calc(763*var(--u));top:calc(335.1*var(--u))"><path d="M0 11.3 L3 8.8 L6.5 13.2 C10.2 7.6 15 2.7 20.4 0 L20.4 2.1 C15.6 6.4 11.2 12.4 8 19.2 L5.2 19.2 Z" fill="#e5e5e5"></path><title>✓</title></svg><i class="div" style="top:calc(381*var(--u))"></i></div><div class="row"><span class="t lab" style="left: calc(46.2*var(--u)); top: calc(417.3*var(--u)); font-size: calc(26.2*var(--u)); line-height: calc(34*var(--u)); color: rgb(156, 163, 175); font-weight: 400; transform: scaleX(1.111); transform-origin: calc(0*var(--u)) 50%;">Protocols:</span><span class="t val" style="right: calc(47.9*var(--u)); top: calc(417.3*var(--u)); font-size: calc(26.2*var(--u)); line-height: calc(34*var(--u)); color: rgb(229, 229, 229); font-weight: 400; transform: scaleX(0.893); transform-origin: 100% 50%;">TLS 1.0, TLS 1.2, mTLS</span><i class="div" style="top:calc(470*var(--u))"></i></div><div class="row"><span class="t lab" style="left: calc(48.4*var(--u)); top: calc(506.3*var(--u)); font-size: calc(26.2*var(--u)); line-height: calc(34*var(--u)); color: rgb(156, 163, 175); font-weight: 400; transform: scaleX(1.055); transform-origin: calc(0*var(--u)) 50%;">Assets:</span><span class="t val" style="right: calc(48.2*var(--u)); top: calc(506.3*var(--u)); font-size: calc(26.2*var(--u)); line-height: calc(34*var(--u)); color: rgb(229, 229, 229); font-weight: 400; transform: scaleX(1.128); transform-origin: 100% 50%;">9 crypto assets</span><i class="div" style="top:calc(559*var(--u))"></i></div></article>
<article class="card" style="left:calc(1867.0*var(--u));top:calc(262*var(--u));border-color:#ef7647"><span class="badge" style="background:#ef7647;color:#fff;width:calc(162*var(--u))"><span class="bt" style="letter-spacing: calc(1.59*var(--u)); margin-right: calc(-1.59*var(--u));">HIGH RISK</span></span><div class="emo-wrap"><svg class="emo" viewBox="0 0 64 64"><defs><linearGradient id="bw" x1="0" y1="0" x2="0" y2="1"><stop offset="0" stop-color="#5c88b0"></stop><stop offset="1" stop-color="#4b7499"></stop></linearGradient><linearGradient id="bb" x1="0" y1="0" x2="1" y2="0"><stop offset="0" stop-color="#dedad8"></stop><stop offset=".5" stop-color="#d2cdcb"></stop><stop offset="1" stop-color="#dbd7d5"></stop></linearGradient></defs><rect x="7.2" y="2.1" width="21.8" height="4.6" rx=".6" fill="#cbc6c4"></rect><rect x="1.9" y="8.6" width="60.1" height="54.3" fill="url(#bb)"></rect><rect x="0.1" y="6.1" width="62.8" height="2.2" rx=".8" fill="#b9b3b1"></rect><rect x="1.2" y="8.1" width="60.8" height="1.3" fill="#8f8987"></rect><rect x="4.7" y="12.8" width="4.6" height="6.7" rx=".5" fill="#eef1f3" opacity=".75"></rect><rect x="5.2" y="13.3" width="3.6" height="5.7" fill="url(#bw)"></rect><rect x="11.1" y="12.8" width="4.6" height="6.7" rx=".5" fill="#eef1f3" opacity=".75"></rect><rect x="11.6" y="13.3" width="3.6" height="5.7" fill="url(#bw)"></rect><rect x="17.2" y="12.8" width="4.6" height="6.7" rx=".5" fill="#eef1f3" opacity=".75"></rect><rect x="17.7" y="13.3" width="3.6" height="5.7" fill="url(#bw)"></rect><rect x="23.3" y="12.8" width="4.6" height="6.7" rx=".5" fill="#eef1f3" opacity=".75"></rect><rect x="23.8" y="13.3" width="3.6" height="5.7" fill="url(#bw)"></rect><rect x="29.3" y="12.8" width="4.6" height="6.7" rx=".5" fill="#eef1f3" opacity=".75"></rect><rect x="29.8" y="13.3" width="3.6" height="5.7" fill="url(#bw)"></rect><rect x="35.6" y="12.8" width="4.6" height="6.7" rx=".5" fill="#eef1f3" opacity=".75"></rect><rect x="36.1" y="13.3" width="3.6" height="5.7" fill="url(#bw)"></rect><rect x="41.8" y="12.8" width="4.6" height="6.7" rx=".5" fill="#eef1f3" opacity=".75"></rect><rect x="42.3" y="13.3" width="3.6" height="5.7" fill="url(#bw)"></rect><rect x="47.9" y="12.8" width="4.6" height="6.7" rx=".5" fill="#eef1f3" opacity=".75"></rect><rect x="48.4" y="13.3" width="3.6" height="5.7" fill="url(#bw)"></rect><rect x="54.2" y="12.8" width="4.6" height="6.7" rx=".5" fill="#eef1f3" opacity=".75"></rect><rect x="54.7" y="13.3" width="3.6" height="5.7" fill="url(#bw)"></rect><rect x="4.7" y="20.8" width="4.6" height="6.7" rx=".5" fill="#eef1f3" opacity=".75"></rect><rect x="5.2" y="21.3" width="3.6" height="5.7" fill="url(#bw)"></rect><rect x="11.1" y="20.8" width="4.6" height="6.7" rx=".5" fill="#eef1f3" opacity=".75"></rect><rect x="11.6" y="21.3" width="3.6" height="5.7" fill="url(#bw)"></rect><rect x="17.2" y="20.8" width="4.6" height="6.7" rx=".5" fill="#eef1f3" opacity=".75"></rect><rect x="17.7" y="21.3" width="3.6" height="5.7" fill="url(#bw)"></rect><rect x="23.3" y="20.8" width="4.6" height="6.7" rx=".5" fill="#eef1f3" opacity=".75"></rect><rect x="23.8" y="21.3" width="3.6" height="5.7" fill="url(#bw)"></rect><rect x="29.3" y="20.8" width="4.6" height="6.7" rx=".5" fill="#eef1f3" opacity=".75"></rect><rect x="29.8" y="21.3" width="3.6" height="5.7" fill="url(#bw)"></rect><rect x="35.6" y="20.8" width="4.6" height="6.7" rx=".5" fill="#eef1f3" opacity=".75"></rect><rect x="36.1" y="21.3" width="3.6" height="5.7" fill="url(#bw)"></rect><rect x="41.8" y="20.8" width="4.6" height="6.7" rx=".5" fill="#eef1f3" opacity=".75"></rect><rect x="42.3" y="21.3" width="3.6" height="5.7" fill="url(#bw)"></rect><rect x="47.9" y="20.8" width="4.6" height="6.7" rx=".5" fill="#eef1f3" opacity=".75"></rect><rect x="48.4" y="21.3" width="3.6" height="5.7" fill="url(#bw)"></rect><rect x="54.2" y="20.8" width="4.6" height="6.7" rx=".5" fill="#eef1f3" opacity=".75"></rect><rect x="54.7" y="21.3" width="3.6" height="5.7" fill="url(#bw)"></rect><rect x="4.7" y="28.6" width="4.6" height="6.7" rx=".5" fill="#eef1f3" opacity=".75"></rect><rect x="5.2" y="29.1" width="3.6" height="5.7" fill="url(#bw)"></rect><rect x="11.1" y="28.6" width="4.6" height="6.7" rx=".5" fill="#eef1f3" opacity=".75"></rect><rect x="11.6" y="29.1" width="3.6" height="5.7" fill="url(#bw)"></rect><rect x="17.2" y="28.6" width="4.6" height="6.7" rx=".5" fill="#eef1f3" opacity=".75"></rect><rect x="17.7" y="29.1" width="3.6" height="5.7" fill="url(#bw)"></rect><rect x="23.3" y="28.6" width="4.6" height="6.7" rx=".5" fill="#eef1f3" opacity=".75"></rect><rect x="23.8" y="29.1" width="3.6" height="5.7" fill="url(#bw)"></rect><rect x="29.3" y="28.6" width="4.6" height="6.7" rx=".5" fill="#eef1f3" opacity=".75"></rect><rect x="29.8" y="29.1" width="3.6" height="5.7" fill="url(#bw)"></rect><rect x="35.6" y="28.6" width="4.6" height="6.7" rx=".5" fill="#eef1f3" opacity=".75"></rect><rect x="36.1" y="29.1" width="3.6" height="5.7" fill="url(#bw)"></rect><rect x="41.8" y="28.6" width="4.6" height="6.7" rx=".5" fill="#eef1f3" opacity=".75"></rect><rect x="42.3" y="29.1" width="3.6" height="5.7" fill="url(#bw)"></rect><rect x="47.9" y="28.6" width="4.6" height="6.7" rx=".5" fill="#eef1f3" opacity=".75"></rect><rect x="48.4" y="29.1" width="3.6" height="5.7" fill="url(#bw)"></rect><rect x="54.2" y="28.6" width="4.6" height="6.7" rx=".5" fill="#eef1f3" opacity=".75"></rect><rect x="54.7" y="29.1" width="3.6" height="5.7" fill="url(#bw)"></rect><rect x="4.7" y="36.6" width="4.6" height="6.7" rx=".5" fill="#eef1f3" opacity=".75"></rect><rect x="5.2" y="37.1" width="3.6" height="5.7" fill="url(#bw)"></rect><rect x="11.1" y="36.6" width="4.6" height="6.7" rx=".5" fill="#eef1f3" opacity=".75"></rect><rect x="11.6" y="37.1" width="3.6" height="5.7" fill="url(#bw)"></rect><rect x="17.2" y="36.6" width="4.6" height="6.7" rx=".5" fill="#eef1f3" opacity=".75"></rect><rect x="17.7" y="37.1" width="3.6" height="5.7" fill="url(#bw)"></rect><rect x="23.3" y="36.6" width="4.6" height="6.7" rx=".5" fill="#eef1f3" opacity=".75"></rect><rect x="23.8" y="37.1" width="3.6" height="5.7" fill="url(#bw)"></rect><rect x="29.3" y="36.6" width="4.6" height="6.7" rx=".5" fill="#eef1f3" opacity=".75"></rect><rect x="29.8" y="37.1" width="3.6" height="5.7" fill="url(#bw)"></rect><rect x="35.6" y="36.6" width="4.6" height="6.7" rx=".5" fill="#eef1f3" opacity=".75"></rect><rect x="36.1" y="37.1" width="3.6" height="5.7" fill="url(#bw)"></rect><rect x="41.8" y="36.6" width="4.6" height="6.7" rx=".5" fill="#eef1f3" opacity=".75"></rect><rect x="42.3" y="37.1" width="3.6" height="5.7" fill="url(#bw)"></rect><rect x="47.9" y="36.6" width="4.6" height="6.7" rx=".5" fill="#eef1f3" opacity=".75"></rect><rect x="48.4" y="37.1" width="3.6" height="5.7" fill="url(#bw)"></rect><rect x="54.2" y="36.6" width="4.6" height="6.7" rx=".5" fill="#eef1f3" opacity=".75"></rect><rect x="54.7" y="37.1" width="3.6" height="5.7" fill="url(#bw)"></rect><rect x="4.7" y="44.7" width="4.6" height="6.1" rx=".5" fill="#eef1f3" opacity=".75"></rect><rect x="5.2" y="45.2" width="3.6" height="5.1" fill="#3f6383"></rect><rect x="11.1" y="44.7" width="4.6" height="6.1" rx=".5" fill="#eef1f3" opacity=".75"></rect><rect x="11.6" y="45.2" width="3.6" height="5.1" fill="#3f6383"></rect><rect x="47.9" y="44.7" width="4.6" height="6.1" rx=".5" fill="#eef1f3" opacity=".75"></rect><rect x="48.4" y="45.2" width="3.6" height="5.1" fill="#3f6383"></rect><rect x="54.2" y="44.7" width="4.6" height="6.1" rx=".5" fill="#eef1f3" opacity=".75"></rect><rect x="54.7" y="45.2" width="3.6" height="5.1" fill="#3f6383"></rect><rect x="4.7" y="52.6" width="4.6" height="6.1" rx=".5" fill="#eef1f3" opacity=".75"></rect><rect x="5.2" y="53.1" width="3.6" height="5.1" fill="#22384b"></rect><rect x="11.1" y="52.6" width="4.6" height="6.1" rx=".5" fill="#eef1f3" opacity=".75"></rect><rect x="11.6" y="53.1" width="3.6" height="5.1" fill="#22384b"></rect><rect x="47.9" y="52.6" width="4.6" height="6.1" rx=".5" fill="#eef1f3" opacity=".75"></rect><rect x="48.4" y="53.1" width="3.6" height="5.1" fill="#22384b"></rect><rect x="54.2" y="52.6" width="4.6" height="6.1" rx=".5" fill="#eef1f3" opacity=".75"></rect><rect x="54.7" y="53.1" width="3.6" height="5.1" fill="#22384b"></rect><rect x="18.1" y="45" width="27.8" height="3.8" rx=".5" fill="#8c8684"></rect><rect x="20.4" y="48.8" width="23.2" height="14.1" fill="#bdb8b6"></rect><rect x="21.1" y="49" width="5.75" height="13.9" fill="#2e4a5f"></rect><rect x="29.06" y="49" width="5.78" height="13.9" fill="#2e4a5f"></rect><rect x="36.8" y="49" width="6.00" height="13.9" fill="#2e4a5f"></rect></svg></div><h3 class="t ctitle" style="left: calc(144.8*var(--u)); top: calc(82.9*var(--u)); font-size: calc(36*var(--u)); line-height: calc(47*var(--u)); color: rgb(255, 255, 255); font-weight: 700; transform: scaleX(1.091); transform-origin: calc(0*var(--u)) 50%;">Treasury Management System</h3><p class="t csub" style="left: calc(145.1*var(--u)); top: calc(144*var(--u)); font-size: calc(26.4*var(--u)); line-height: calc(34*var(--u)); color: rgb(156, 163, 175); font-weight: 400; transform: scaleX(1.039); transform-origin: calc(0*var(--u)) 50%;">Tier 1 <span class="d">—</span> Payment</p><div class="row"><span class="t lab" style="left: calc(47.3*var(--u)); top: calc(239.3*var(--u)); font-size: calc(26.2*var(--u)); line-height: calc(34*var(--u)); color: rgb(156, 163, 175); font-weight: 400; transform: scaleX(1.095); transform-origin: calc(0*var(--u)) 50%;">Owner:</span><span class="t val" style="right: calc(49.3*var(--u)); top: calc(239.3*var(--u)); font-size: calc(26.2*var(--u)); line-height: calc(34*var(--u)); color: rgb(229, 229, 229); font-weight: 400; transform: scaleX(1.082); transform-origin: 100% 50%;">Angela Park</span><i class="div" style="top:calc(292*var(--u))"></i></div><div class="row"><span class="t lab" style="left: calc(47.3*var(--u)); top: calc(328.3*var(--u)); font-size: calc(26.2*var(--u)); line-height: calc(34*var(--u)); color: rgb(156, 163, 175); font-weight: 400; transform: scaleX(1.138); transform-origin: calc(0*var(--u)) 50%;">Certificates:</span><span class="t val" style="right: calc(76.8*var(--u)); top: calc(328.3*var(--u)); font-size: calc(26.2*var(--u)); line-height: calc(34*var(--u)); color: rgb(229, 229, 229); font-weight: 400; transform: scaleX(1.084); transform-origin: 100% 50%;">1 cert (RSA-2048)</span><svg class="chk" viewBox="0 0 20.4 19.2" style="left:calc(763*var(--u));top:calc(335.1*var(--u))"><path d="M0 11.3 L3 8.8 L6.5 13.2 C10.2 7.6 15 2.7 20.4 0 L20.4 2.1 C15.6 6.4 11.2 12.4 8 19.2 L5.2 19.2 Z" fill="#e5e5e5"></path><title>✓</title></svg><i class="div" style="top:calc(381*var(--u))"></i></div><div class="row"><span class="t lab" style="left: calc(46.2*var(--u)); top: calc(417.3*var(--u)); font-size: calc(26.2*var(--u)); line-height: calc(34*var(--u)); color: rgb(156, 163, 175); font-weight: 400; transform: scaleX(1.111); transform-origin: calc(0*var(--u)) 50%;">Protocols:</span><span class="t val" style="right: calc(47.9*var(--u)); top: calc(417.3*var(--u)); font-size: calc(26.2*var(--u)); line-height: calc(34*var(--u)); color: rgb(229, 229, 229); font-weight: 400; transform: scaleX(0.893); transform-origin: 100% 50%;">TLS 1.1, TLS 1.2, PKCS#11, mTLS</span><i class="div" style="top:calc(470*var(--u))"></i></div><div class="row"><span class="t lab" style="left: calc(48.4*var(--u)); top: calc(506.3*var(--u)); font-size: calc(26.2*var(--u)); line-height: calc(34*var(--u)); color: rgb(156, 163, 175); font-weight: 400; transform: scaleX(1.055); transform-origin: calc(0*var(--u)) 50%;">Assets:</span><span class="t val" style="right: calc(48.2*var(--u)); top: calc(506.3*var(--u)); font-size: calc(26.2*var(--u)); line-height: calc(34*var(--u)); color: rgb(229, 229, 229); font-weight: 400; transform: scaleX(1.128); transform-origin: 100% 50%;">9 crypto assets</span><i class="div" style="top:calc(559*var(--u))"></i></div></article>
<article class="card" style="left:calc(96.0*var(--u));top:calc(927*var(--u));border-color:#ef7647"><span class="badge" style="background:#ef7647;color:#fff;width:calc(162*var(--u))"><span class="bt" style="letter-spacing: calc(1.59*var(--u)); margin-right: calc(-1.59*var(--u));">HIGH RISK</span></span><div class="emo-wrap"><svg class="emo" viewBox="0 0 64 64"><defs><linearGradient id="bw" x1="0" y1="0" x2="0" y2="1"><stop offset="0" stop-color="#5c88b0"></stop><stop offset="1" stop-color="#4b7499"></stop></linearGradient><linearGradient id="bb" x1="0" y1="0" x2="1" y2="0"><stop offset="0" stop-color="#dedad8"></stop><stop offset=".5" stop-color="#d2cdcb"></stop><stop offset="1" stop-color="#dbd7d5"></stop></linearGradient></defs><rect x="7.2" y="2.1" width="21.8" height="4.6" rx=".6" fill="#cbc6c4"></rect><rect x="1.9" y="8.6" width="60.1" height="54.3" fill="url(#bb)"></rect><rect x="0.1" y="6.1" width="62.8" height="2.2" rx=".8" fill="#b9b3b1"></rect><rect x="1.2" y="8.1" width="60.8" height="1.3" fill="#8f8987"></rect><rect x="4.7" y="12.8" width="4.6" height="6.7" rx=".5" fill="#eef1f3" opacity=".75"></rect><rect x="5.2" y="13.3" width="3.6" height="5.7" fill="url(#bw)"></rect><rect x="11.1" y="12.8" width="4.6" height="6.7" rx=".5" fill="#eef1f3" opacity=".75"></rect><rect x="11.6" y="13.3" width="3.6" height="5.7" fill="url(#bw)"></rect><rect x="17.2" y="12.8" width="4.6" height="6.7" rx=".5" fill="#eef1f3" opacity=".75"></rect><rect x="17.7" y="13.3" width="3.6" height="5.7" fill="url(#bw)"></rect><rect x="23.3" y="12.8" width="4.6" height="6.7" rx=".5" fill="#eef1f3" opacity=".75"></rect><rect x="23.8" y="13.3" width="3.6" height="5.7" fill="url(#bw)"></rect><rect x="29.3" y="12.8" width="4.6" height="6.7" rx=".5" fill="#eef1f3" opacity=".75"></rect><rect x="29.8" y="13.3" width="3.6" height="5.7" fill="url(#bw)"></rect><rect x="35.6" y="12.8" width="4.6" height="6.7" rx=".5" fill="#eef1f3" opacity=".75"></rect><rect x="36.1" y="13.3" width="3.6" height="5.7" fill="url(#bw)"></rect><rect x="41.8" y="12.8" width="4.6" height="6.7" rx=".5" fill="#eef1f3" opacity=".75"></rect><rect x="42.3" y="13.3" width="3.6" height="5.7" fill="url(#bw)"></rect><rect x="47.9" y="12.8" width="4.6" height="6.7" rx=".5" fill="#eef1f3" opacity=".75"></rect><rect x="48.4" y="13.3" width="3.6" height="5.7" fill="url(#bw)"></rect><rect x="54.2" y="12.8" width="4.6" height="6.7" rx=".5" fill="#eef1f3" opacity=".75"></rect><rect x="54.7" y="13.3" width="3.6" height="5.7" fill="url(#bw)"></rect><rect x="4.7" y="20.8" width="4.6" height="6.7" rx=".5" fill="#eef1f3" opacity=".75"></rect><rect x="5.2" y="21.3" width="3.6" height="5.7" fill="url(#bw)"></rect><rect x="11.1" y="20.8" width="4.6" height="6.7" rx=".5" fill="#eef1f3" opacity=".75"></rect><rect x="11.6" y="21.3" width="3.6" height="5.7" fill="url(#bw)"></rect><rect x="17.2" y="20.8" width="4.6" height="6.7" rx=".5" fill="#eef1f3" opacity=".75"></rect><rect x="17.7" y="21.3" width="3.6" height="5.7" fill="url(#bw)"></rect><rect x="23.3" y="20.8" width="4.6" height="6.7" rx=".5" fill="#eef1f3" opacity=".75"></rect><rect x="23.8" y="21.3" width="3.6" height="5.7" fill="url(#bw)"></rect><rect x="29.3" y="20.8" width="4.6" height="6.7" rx=".5" fill="#eef1f3" opacity=".75"></rect><rect x="29.8" y="21.3" width="3.6" height="5.7" fill="url(#bw)"></rect><rect x="35.6" y="20.8" width="4.6" height="6.7" rx=".5" fill="#eef1f3" opacity=".75"></rect><rect x="36.1" y="21.3" width="3.6" height="5.7" fill="url(#bw)"></rect><rect x="41.8" y="20.8" width="4.6" height="6.7" rx=".5" fill="#eef1f3" opacity=".75"></rect><rect x="42.3" y="21.3" width="3.6" height="5.7" fill="url(#bw)"></rect><rect x="47.9" y="20.8" width="4.6" height="6.7" rx=".5" fill="#eef1f3" opacity=".75"></rect><rect x="48.4" y="21.3" width="3.6" height="5.7" fill="url(#bw)"></rect><rect x="54.2" y="20.8" width="4.6" height="6.7" rx=".5" fill="#eef1f3" opacity=".75"></rect><rect x="54.7" y="21.3" width="3.6" height="5.7" fill="url(#bw)"></rect><rect x="4.7" y="28.6" width="4.6" height="6.7" rx=".5" fill="#eef1f3" opacity=".75"></rect><rect x="5.2" y="29.1" width="3.6" height="5.7" fill="url(#bw)"></rect><rect x="11.1" y="28.6" width="4.6" height="6.7" rx=".5" fill="#eef1f3" opacity=".75"></rect><rect x="11.6" y="29.1" width="3.6" height="5.7" fill="url(#bw)"></rect><rect x="17.2" y="28.6" width="4.6" height="6.7" rx=".5" fill="#eef1f3" opacity=".75"></rect><rect x="17.7" y="29.1" width="3.6" height="5.7" fill="url(#bw)"></rect><rect x="23.3" y="28.6" width="4.6" height="6.7" rx=".5" fill="#eef1f3" opacity=".75"></rect><rect x="23.8" y="29.1" width="3.6" height="5.7" fill="url(#bw)"></rect><rect x="29.3" y="28.6" width="4.6" height="6.7" rx=".5" fill="#eef1f3" opacity=".75"></rect><rect x="29.8" y="29.1" width="3.6" height="5.7" fill="url(#bw)"></rect><rect x="35.6" y="28.6" width="4.6" height="6.7" rx=".5" fill="#eef1f3" opacity=".75"></rect><rect x="36.1" y="29.1" width="3.6" height="5.7" fill="url(#bw)"></rect><rect x="41.8" y="28.6" width="4.6" height="6.7" rx=".5" fill="#eef1f3" opacity=".75"></rect><rect x="42.3" y="29.1" width="3.6" height="5.7" fill="url(#bw)"></rect><rect x="47.9" y="28.6" width="4.6" height="6.7" rx=".5" fill="#eef1f3" opacity=".75"></rect><rect x="48.4" y="29.1" width="3.6" height="5.7" fill="url(#bw)"></rect><rect x="54.2" y="28.6" width="4.6" height="6.7" rx=".5" fill="#eef1f3" opacity=".75"></rect><rect x="54.7" y="29.1" width="3.6" height="5.7" fill="url(#bw)"></rect><rect x="4.7" y="36.6" width="4.6" height="6.7" rx=".5" fill="#eef1f3" opacity=".75"></rect><rect x="5.2" y="37.1" width="3.6" height="5.7" fill="url(#bw)"></rect><rect x="11.1" y="36.6" width="4.6" height="6.7" rx=".5" fill="#eef1f3" opacity=".75"></rect><rect x="11.6" y="37.1" width="3.6" height="5.7" fill="url(#bw)"></rect><rect x="17.2" y="36.6" width="4.6" height="6.7" rx=".5" fill="#eef1f3" opacity=".75"></rect><rect x="17.7" y="37.1" width="3.6" height="5.7" fill="url(#bw)"></rect><rect x="23.3" y="36.6" width="4.6" height="6.7" rx=".5" fill="#eef1f3" opacity=".75"></rect><rect x="23.8" y="37.1" width="3.6" height="5.7" fill="url(#bw)"></rect><rect x="29.3" y="36.6" width="4.6" height="6.7" rx=".5" fill="#eef1f3" opacity=".75"></rect><rect x="29.8" y="37.1" width="3.6" height="5.7" fill="url(#bw)"></rect><rect x="35.6" y="36.6" width="4.6" height="6.7" rx=".5" fill="#eef1f3" opacity=".75"></rect><rect x="36.1" y="37.1" width="3.6" height="5.7" fill="url(#bw)"></rect><rect x="41.8" y="36.6" width="4.6" height="6.7" rx=".5" fill="#eef1f3" opacity=".75"></rect><rect x="42.3" y="37.1" width="3.6" height="5.7" fill="url(#bw)"></rect><rect x="47.9" y="36.6" width="4.6" height="6.7" rx=".5" fill="#eef1f3" opacity=".75"></rect><rect x="48.4" y="37.1" width="3.6" height="5.7" fill="url(#bw)"></rect><rect x="54.2" y="36.6" width="4.6" height="6.7" rx=".5" fill="#eef1f3" opacity=".75"></rect><rect x="54.7" y="37.1" width="3.6" height="5.7" fill="url(#bw)"></rect><rect x="4.7" y="44.7" width="4.6" height="6.1" rx=".5" fill="#eef1f3" opacity=".75"></rect><rect x="5.2" y="45.2" width="3.6" height="5.1" fill="#3f6383"></rect><rect x="11.1" y="44.7" width="4.6" height="6.1" rx=".5" fill="#eef1f3" opacity=".75"></rect><rect x="11.6" y="45.2" width="3.6" height="5.1" fill="#3f6383"></rect><rect x="47.9" y="44.7" width="4.6" height="6.1" rx=".5" fill="#eef1f3" opacity=".75"></rect><rect x="48.4" y="45.2" width="3.6" height="5.1" fill="#3f6383"></rect><rect x="54.2" y="44.7" width="4.6" height="6.1" rx=".5" fill="#eef1f3" opacity=".75"></rect><rect x="54.7" y="45.2" width="3.6" height="5.1" fill="#3f6383"></rect><rect x="4.7" y="52.6" width="4.6" height="6.1" rx=".5" fill="#eef1f3" opacity=".75"></rect><rect x="5.2" y="53.1" width="3.6" height="5.1" fill="#22384b"></rect><rect x="11.1" y="52.6" width="4.6" height="6.1" rx=".5" fill="#eef1f3" opacity=".75"></rect><rect x="11.6" y="53.1" width="3.6" height="5.1" fill="#22384b"></rect><rect x="47.9" y="52.6" width="4.6" height="6.1" rx=".5" fill="#eef1f3" opacity=".75"></rect><rect x="48.4" y="53.1" width="3.6" height="5.1" fill="#22384b"></rect><rect x="54.2" y="52.6" width="4.6" height="6.1" rx=".5" fill="#eef1f3" opacity=".75"></rect><rect x="54.7" y="53.1" width="3.6" height="5.1" fill="#22384b"></rect><rect x="18.1" y="45" width="27.8" height="3.8" rx=".5" fill="#8c8684"></rect><rect x="20.4" y="48.8" width="23.2" height="14.1" fill="#bdb8b6"></rect><rect x="21.1" y="49" width="5.75" height="13.9" fill="#2e4a5f"></rect><rect x="29.06" y="49" width="5.78" height="13.9" fill="#2e4a5f"></rect><rect x="36.8" y="49" width="6.00" height="13.9" fill="#2e4a5f"></rect></svg></div><h3 class="t ctitle" style="left: calc(144.8*var(--u)); top: calc(82.9*var(--u)); font-size: calc(36*var(--u)); line-height: calc(47*var(--u)); color: rgb(255, 255, 255); font-weight: 700; transform: scaleX(1.104); transform-origin: calc(0*var(--u)) 50%;">Wealth Management Platform</h3><p class="t csub" style="left: calc(145.1*var(--u)); top: calc(144*var(--u)); font-size: calc(26.4*var(--u)); line-height: calc(34*var(--u)); color: rgb(156, 163, 175); font-weight: 400; transform: scaleX(1.039); transform-origin: calc(0*var(--u)) 50%;">Tier 1 <span class="d">—</span> Payment</p><div class="row"><span class="t lab" style="left: calc(47.3*var(--u)); top: calc(239.3*var(--u)); font-size: calc(26.2*var(--u)); line-height: calc(34*var(--u)); color: rgb(156, 163, 175); font-weight: 400; transform: scaleX(1.095); transform-origin: calc(0*var(--u)) 50%;">Owner:</span><span class="t val" style="right: calc(46.5*var(--u)); top: calc(239.3*var(--u)); font-size: calc(26.2*var(--u)); line-height: calc(34*var(--u)); color: rgb(229, 229, 229); font-weight: 400; transform: scaleX(1.132); transform-origin: 100% 50%;">James Thornton</span><i class="div" style="top:calc(292*var(--u))"></i></div><div class="row"><span class="t lab" style="left: calc(47.3*var(--u)); top: calc(328.3*var(--u)); font-size: calc(26.2*var(--u)); line-height: calc(34*var(--u)); color: rgb(156, 163, 175); font-weight: 400; transform: scaleX(1.138); transform-origin: calc(0*var(--u)) 50%;">Certificates:</span><span class="t val" style="right: calc(76.8*var(--u)); top: calc(328.3*var(--u)); font-size: calc(26.2*var(--u)); line-height: calc(34*var(--u)); color: rgb(229, 229, 229); font-weight: 400; transform: scaleX(1.084); transform-origin: 100% 50%;">1 cert (RSA-2048)</span><svg class="chk" viewBox="0 0 20.4 19.2" style="left:calc(763*var(--u));top:calc(335.1*var(--u))"><path d="M0 11.3 L3 8.8 L6.5 13.2 C10.2 7.6 15 2.7 20.4 0 L20.4 2.1 C15.6 6.4 11.2 12.4 8 19.2 L5.2 19.2 Z" fill="#e5e5e5"></path><title>✓</title></svg><i class="div" style="top:calc(381*var(--u))"></i></div><div class="row"><span class="t lab" style="left: calc(46.2*var(--u)); top: calc(417.3*var(--u)); font-size: calc(26.2*var(--u)); line-height: calc(34*var(--u)); color: rgb(156, 163, 175); font-weight: 400; transform: scaleX(1.111); transform-origin: calc(0*var(--u)) 50%;">Protocols:</span><span class="t val" style="right: calc(47.9*var(--u)); top: calc(417.3*var(--u)); font-size: calc(26.2*var(--u)); line-height: calc(34*var(--u)); color: rgb(229, 229, 229); font-weight: 400; transform: scaleX(0.867); transform-origin: 100% 50%;">TLS 1.2, TLS 1.1, mTLS</span><i class="div" style="top:calc(470*var(--u))"></i></div><div class="row"><span class="t lab" style="left: calc(48.4*var(--u)); top: calc(506.3*var(--u)); font-size: calc(26.2*var(--u)); line-height: calc(34*var(--u)); color: rgb(156, 163, 175); font-weight: 400; transform: scaleX(1.055); transform-origin: calc(0*var(--u)) 50%;">Assets:</span><span class="t val" style="right: calc(48.2*var(--u)); top: calc(506.3*var(--u)); font-size: calc(26.2*var(--u)); line-height: calc(34*var(--u)); color: rgb(229, 229, 229); font-weight: 400; transform: scaleX(1.131); transform-origin: 100% 50%;">8 crypto assets</span><i class="div" style="top:calc(559*var(--u))"></i></div></article>
<article class="card" style="left:calc(981.5*var(--u));top:calc(927*var(--u));border-color:#f5c24f"><span class="badge" style="background:#f5c24f;color:#000;width:calc(197*var(--u))"><span class="bt" style="letter-spacing: calc(1.89*var(--u)); margin-right: calc(-1.89*var(--u));">MEDIUM RISK</span></span><div class="emo-wrap"><svg class="emo" viewBox="0 0 64 64"><defs><linearGradient id="tg" gradientUnits="userSpaceOnUse" x1="-7" y1="0" x2="7" y2="0"><stop offset="0" stop-color="#8fdc85"></stop><stop offset=".32" stop-color="#3d8a38"></stop><stop offset=".72" stop-color="#5ccb4c"></stop><stop offset="1" stop-color="#3a9434"></stop></linearGradient></defs><g transform="translate(29.05 34.15) rotate(43)"><rect x="-6.9" y="-35.5" width="13.8" height="71.3" rx="6.9" fill="#3b403b" opacity=".5"></rect><path d="M-6.3 -17.6 L6.3 -29.3 V29 a6.3 6.3 0 0 1 -12.6 0 Z" fill="url(#tg)"></path><rect x="-5.9" y="-34" width="3.3" height="63" rx="1.5" fill="#e6ebe7" opacity=".85"></rect><ellipse cx="0" cy="-35.6" rx="9.4" ry="3.1" fill="#2a2d2a" stroke="#dfe2df" stroke-width="1.7"></ellipse><circle cx="2.6" cy="-15" r="1.6" fill="#86e878"></circle><circle cx="1" cy="1" r="1.5" fill="#86e878"></circle><circle cx="3.4" cy="-6" r="1" fill="#86e878"></circle><circle cx="1.4" cy="14" r="1.1" fill="#86e878"></circle><circle cx="3" cy="24" r="1.2" fill="#86e878"></circle><circle cx="-0.5" cy="27" r="1.3" fill="#86e878"></circle></g><circle cx="58.6" cy="1.6" r="1.8" fill="none" stroke="#2f8a2c" stroke-width="1"></circle><circle cx="61.7" cy="6.3" r="1.1" fill="#2f8a2c"></circle><circle cx="54.5" cy="10" r="1" fill="#2f8a2c"></circle></svg></div><h3 class="t ctitle" style="left: calc(142.7*var(--u)); top: calc(82.9*var(--u)); font-size: calc(36*var(--u)); line-height: calc(47*var(--u)); color: rgb(255, 255, 255); font-weight: 700; transform: scaleX(1.064); transform-origin: calc(0*var(--u)) 50%;">DevOps Platform</h3><p class="t csub" style="left: calc(142.9*var(--u)); top: calc(144*var(--u)); font-size: calc(26.4*var(--u)); line-height: calc(34*var(--u)); color: rgb(156, 163, 175); font-weight: 400; transform: scaleX(1.121); transform-origin: calc(0*var(--u)) 50%;">Dev/Test <span class="d">—</span> Internal</p><div class="row"><span class="t lab" style="left: calc(47.3*var(--u)); top: calc(239.3*var(--u)); font-size: calc(26.2*var(--u)); line-height: calc(34*var(--u)); color: rgb(156, 163, 175); font-weight: 400; transform: scaleX(1.095); transform-origin: calc(0*var(--u)) 50%;">Owner:</span><span class="t val" style="right: calc(48.2*var(--u)); top: calc(239.3*var(--u)); font-size: calc(26.2*var(--u)); line-height: calc(34*var(--u)); color: rgb(229, 229, 229); font-weight: 400; transform: scaleX(1.055); transform-origin: 100% 50%;">Alex Petrov</span><i class="div" style="top:calc(292*var(--u))"></i></div><div class="row"><span class="t lab" style="left: calc(47.3*var(--u)); top: calc(328.3*var(--u)); font-size: calc(26.2*var(--u)); line-height: calc(34*var(--u)); color: rgb(156, 163, 175); font-weight: 400; transform: scaleX(1.138); transform-origin: calc(0*var(--u)) 50%;">Certificates:</span><span class="t val" style="right: calc(76.8*var(--u)); top: calc(328.3*var(--u)); font-size: calc(26.2*var(--u)); line-height: calc(34*var(--u)); color: rgb(229, 229, 229); font-weight: 400; transform: scaleX(1.084); transform-origin: 100% 50%;">1 cert (RSA-2048)</span><svg class="chk" viewBox="0 0 20.4 19.2" style="left:calc(763*var(--u));top:calc(335.1*var(--u))"><path d="M0 11.3 L3 8.8 L6.5 13.2 C10.2 7.6 15 2.7 20.4 0 L20.4 2.1 C15.6 6.4 11.2 12.4 8 19.2 L5.2 19.2 Z" fill="#e5e5e5"></path><title>✓</title></svg><i class="div" style="top:calc(381*var(--u))"></i></div><div class="row"><span class="t lab" style="left: calc(46.2*var(--u)); top: calc(417.3*var(--u)); font-size: calc(26.2*var(--u)); line-height: calc(34*var(--u)); color: rgb(156, 163, 175); font-weight: 400; transform: scaleX(1.111); transform-origin: calc(0*var(--u)) 50%;">Protocols:</span><span class="t val" style="right: calc(47.8*var(--u)); top: calc(417.3*var(--u)); font-size: calc(26.2*var(--u)); line-height: calc(34*var(--u)); color: rgb(229, 229, 229); font-weight: 400; transform: scaleX(0.863); transform-origin: 100% 50%;">TLS 1.2, TLS 1.0</span><i class="div" style="top:calc(470*var(--u))"></i></div><div class="row"><span class="t lab" style="left: calc(48.4*var(--u)); top: calc(506.3*var(--u)); font-size: calc(26.2*var(--u)); line-height: calc(34*var(--u)); color: rgb(156, 163, 175); font-weight: 400; transform: scaleX(1.055); transform-origin: calc(0*var(--u)) 50%;">Assets:</span><span class="t val" style="right: calc(48.2*var(--u)); top: calc(506.3*var(--u)); font-size: calc(26.2*var(--u)); line-height: calc(34*var(--u)); color: rgb(229, 229, 229); font-weight: 400; transform: scaleX(1.124); transform-origin: 100% 50%;">4 crypto assets</span><i class="div" style="top:calc(559*var(--u))"></i></div></article>
<article class="card" style="left:calc(1867.0*var(--u));top:calc(927*var(--u));border-color:#54b888"><span class="badge" style="background:#54b888;color:#fff;width:calc(157*var(--u))"><span class="bt" style="letter-spacing: calc(1.56*var(--u)); margin-right: calc(-1.56*var(--u));">LOW RISK</span></span><div class="emo-wrap"><svg class="emo" viewBox="0 0 64 64"><defs><linearGradient id="bw" x1="0" y1="0" x2="0" y2="1"><stop offset="0" stop-color="#5c88b0"></stop><stop offset="1" stop-color="#4b7499"></stop></linearGradient><linearGradient id="bb" x1="0" y1="0" x2="1" y2="0"><stop offset="0" stop-color="#dedad8"></stop><stop offset=".5" stop-color="#d2cdcb"></stop><stop offset="1" stop-color="#dbd7d5"></stop></linearGradient></defs><rect x="7.2" y="2.1" width="21.8" height="4.6" rx=".6" fill="#cbc6c4"></rect><rect x="1.9" y="8.6" width="60.1" height="54.3" fill="url(#bb)"></rect><rect x="0.1" y="6.1" width="62.8" height="2.2" rx=".8" fill="#b9b3b1"></rect><rect x="1.2" y="8.1" width="60.8" height="1.3" fill="#8f8987"></rect><rect x="4.7" y="12.8" width="4.6" height="6.7" rx=".5" fill="#eef1f3" opacity=".75"></rect><rect x="5.2" y="13.3" width="3.6" height="5.7" fill="url(#bw)"></rect><rect x="11.1" y="12.8" width="4.6" height="6.7" rx=".5" fill="#eef1f3" opacity=".75"></rect><rect x="11.6" y="13.3" width="3.6" height="5.7" fill="url(#bw)"></rect><rect x="17.2" y="12.8" width="4.6" height="6.7" rx=".5" fill="#eef1f3" opacity=".75"></rect><rect x="17.7" y="13.3" width="3.6" height="5.7" fill="url(#bw)"></rect><rect x="23.3" y="12.8" width="4.6" height="6.7" rx=".5" fill="#eef1f3" opacity=".75"></rect><rect x="23.8" y="13.3" width="3.6" height="5.7" fill="url(#bw)"></rect><rect x="29.3" y="12.8" width="4.6" height="6.7" rx=".5" fill="#eef1f3" opacity=".75"></rect><rect x="29.8" y="13.3" width="3.6" height="5.7" fill="url(#bw)"></rect><rect x="35.6" y="12.8" width="4.6" height="6.7" rx=".5" fill="#eef1f3" opacity=".75"></rect><rect x="36.1" y="13.3" width="3.6" height="5.7" fill="url(#bw)"></rect><rect x="41.8" y="12.8" width="4.6" height="6.7" rx=".5" fill="#eef1f3" opacity=".75"></rect><rect x="42.3" y="13.3" width="3.6" height="5.7" fill="url(#bw)"></rect><rect x="47.9" y="12.8" width="4.6" height="6.7" rx=".5" fill="#eef1f3" opacity=".75"></rect><rect x="48.4" y="13.3" width="3.6" height="5.7" fill="url(#bw)"></rect><rect x="54.2" y="12.8" width="4.6" height="6.7" rx=".5" fill="#eef1f3" opacity=".75"></rect><rect x="54.7" y="13.3" width="3.6" height="5.7" fill="url(#bw)"></rect><rect x="4.7" y="20.8" width="4.6" height="6.7" rx=".5" fill="#eef1f3" opacity=".75"></rect><rect x="5.2" y="21.3" width="3.6" height="5.7" fill="url(#bw)"></rect><rect x="11.1" y="20.8" width="4.6" height="6.7" rx=".5" fill="#eef1f3" opacity=".75"></rect><rect x="11.6" y="21.3" width="3.6" height="5.7" fill="url(#bw)"></rect><rect x="17.2" y="20.8" width="4.6" height="6.7" rx=".5" fill="#eef1f3" opacity=".75"></rect><rect x="17.7" y="21.3" width="3.6" height="5.7" fill="url(#bw)"></rect><rect x="23.3" y="20.8" width="4.6" height="6.7" rx=".5" fill="#eef1f3" opacity=".75"></rect><rect x="23.8" y="21.3" width="3.6" height="5.7" fill="url(#bw)"></rect><rect x="29.3" y="20.8" width="4.6" height="6.7" rx=".5" fill="#eef1f3" opacity=".75"></rect><rect x="29.8" y="21.3" width="3.6" height="5.7" fill="url(#bw)"></rect><rect x="35.6" y="20.8" width="4.6" height="6.7" rx=".5" fill="#eef1f3" opacity=".75"></rect><rect x="36.1" y="21.3" width="3.6" height="5.7" fill="url(#bw)"></rect><rect x="41.8" y="20.8" width="4.6" height="6.7" rx=".5" fill="#eef1f3" opacity=".75"></rect><rect x="42.3" y="21.3" width="3.6" height="5.7" fill="url(#bw)"></rect><rect x="47.9" y="20.8" width="4.6" height="6.7" rx=".5" fill="#eef1f3" opacity=".75"></rect><rect x="48.4" y="21.3" width="3.6" height="5.7" fill="url(#bw)"></rect><rect x="54.2" y="20.8" width="4.6" height="6.7" rx=".5" fill="#eef1f3" opacity=".75"></rect><rect x="54.7" y="21.3" width="3.6" height="5.7" fill="url(#bw)"></rect><rect x="4.7" y="28.6" width="4.6" height="6.7" rx=".5" fill="#eef1f3" opacity=".75"></rect><rect x="5.2" y="29.1" width="3.6" height="5.7" fill="url(#bw)"></rect><rect x="11.1" y="28.6" width="4.6" height="6.7" rx=".5" fill="#eef1f3" opacity=".75"></rect><rect x="11.6" y="29.1" width="3.6" height="5.7" fill="url(#bw)"></rect><rect x="17.2" y="28.6" width="4.6" height="6.7" rx=".5" fill="#eef1f3" opacity=".75"></rect><rect x="17.7" y="29.1" width="3.6" height="5.7" fill="url(#bw)"></rect><rect x="23.3" y="28.6" width="4.6" height="6.7" rx=".5" fill="#eef1f3" opacity=".75"></rect><rect x="23.8" y="29.1" width="3.6" height="5.7" fill="url(#bw)"></rect><rect x="29.3" y="28.6" width="4.6" height="6.7" rx=".5" fill="#eef1f3" opacity=".75"></rect><rect x="29.8" y="29.1" width="3.6" height="5.7" fill="url(#bw)"></rect><rect x="35.6" y="28.6" width="4.6" height="6.7" rx=".5" fill="#eef1f3" opacity=".75"></rect><rect x="36.1" y="29.1" width="3.6" height="5.7" fill="url(#bw)"></rect><rect x="41.8" y="28.6" width="4.6" height="6.7" rx=".5" fill="#eef1f3" opacity=".75"></rect><rect x="42.3" y="29.1" width="3.6" height="5.7" fill="url(#bw)"></rect><rect x="47.9" y="28.6" width="4.6" height="6.7" rx=".5" fill="#eef1f3" opacity=".75"></rect><rect x="48.4" y="29.1" width="3.6" height="5.7" fill="url(#bw)"></rect><rect x="54.2" y="28.6" width="4.6" height="6.7" rx=".5" fill="#eef1f3" opacity=".75"></rect><rect x="54.7" y="29.1" width="3.6" height="5.7" fill="url(#bw)"></rect><rect x="4.7" y="36.6" width="4.6" height="6.7" rx=".5" fill="#eef1f3" opacity=".75"></rect><rect x="5.2" y="37.1" width="3.6" height="5.7" fill="url(#bw)"></rect><rect x="11.1" y="36.6" width="4.6" height="6.7" rx=".5" fill="#eef1f3" opacity=".75"></rect><rect x="11.6" y="37.1" width="3.6" height="5.7" fill="url(#bw)"></rect><rect x="17.2" y="36.6" width="4.6" height="6.7" rx=".5" fill="#eef1f3" opacity=".75"></rect><rect x="17.7" y="37.1" width="3.6" height="5.7" fill="url(#bw)"></rect><rect x="23.3" y="36.6" width="4.6" height="6.7" rx=".5" fill="#eef1f3" opacity=".75"></rect><rect x="23.8" y="37.1" width="3.6" height="5.7" fill="url(#bw)"></rect><rect x="29.3" y="36.6" width="4.6" height="6.7" rx=".5" fill="#eef1f3" opacity=".75"></rect><rect x="29.8" y="37.1" width="3.6" height="5.7" fill="url(#bw)"></rect><rect x="35.6" y="36.6" width="4.6" height="6.7" rx=".5" fill="#eef1f3" opacity=".75"></rect><rect x="36.1" y="37.1" width="3.6" height="5.7" fill="url(#bw)"></rect><rect x="41.8" y="36.6" width="4.6" height="6.7" rx=".5" fill="#eef1f3" opacity=".75"></rect><rect x="42.3" y="37.1" width="3.6" height="5.7" fill="url(#bw)"></rect><rect x="47.9" y="36.6" width="4.6" height="6.7" rx=".5" fill="#eef1f3" opacity=".75"></rect><rect x="48.4" y="37.1" width="3.6" height="5.7" fill="url(#bw)"></rect><rect x="54.2" y="36.6" width="4.6" height="6.7" rx=".5" fill="#eef1f3" opacity=".75"></rect><rect x="54.7" y="37.1" width="3.6" height="5.7" fill="url(#bw)"></rect><rect x="4.7" y="44.7" width="4.6" height="6.1" rx=".5" fill="#eef1f3" opacity=".75"></rect><rect x="5.2" y="45.2" width="3.6" height="5.1" fill="#3f6383"></rect><rect x="11.1" y="44.7" width="4.6" height="6.1" rx=".5" fill="#eef1f3" opacity=".75"></rect><rect x="11.6" y="45.2" width="3.6" height="5.1" fill="#3f6383"></rect><rect x="47.9" y="44.7" width="4.6" height="6.1" rx=".5" fill="#eef1f3" opacity=".75"></rect><rect x="48.4" y="45.2" width="3.6" height="5.1" fill="#3f6383"></rect><rect x="54.2" y="44.7" width="4.6" height="6.1" rx=".5" fill="#eef1f3" opacity=".75"></rect><rect x="54.7" y="45.2" width="3.6" height="5.1" fill="#3f6383"></rect><rect x="4.7" y="52.6" width="4.6" height="6.1" rx=".5" fill="#eef1f3" opacity=".75"></rect><rect x="5.2" y="53.1" width="3.6" height="5.1" fill="#22384b"></rect><rect x="11.1" y="52.6" width="4.6" height="6.1" rx=".5" fill="#eef1f3" opacity=".75"></rect><rect x="11.6" y="53.1" width="3.6" height="5.1" fill="#22384b"></rect><rect x="47.9" y="52.6" width="4.6" height="6.1" rx=".5" fill="#eef1f3" opacity=".75"></rect><rect x="48.4" y="53.1" width="3.6" height="5.1" fill="#22384b"></rect><rect x="54.2" y="52.6" width="4.6" height="6.1" rx=".5" fill="#eef1f3" opacity=".75"></rect><rect x="54.7" y="53.1" width="3.6" height="5.1" fill="#22384b"></rect><rect x="18.1" y="45" width="27.8" height="3.8" rx=".5" fill="#8c8684"></rect><rect x="20.4" y="48.8" width="23.2" height="14.1" fill="#bdb8b6"></rect><rect x="21.1" y="49" width="5.75" height="13.9" fill="#2e4a5f"></rect><rect x="29.06" y="49" width="5.78" height="13.9" fill="#2e4a5f"></rect><rect x="36.8" y="49" width="6.00" height="13.9" fill="#2e4a5f"></rect></svg></div><h3 class="t ctitle" style="left: calc(142.7*var(--u)); top: calc(82.9*var(--u)); font-size: calc(36*var(--u)); line-height: calc(47*var(--u)); color: rgb(255, 255, 255); font-weight: 700; transform: scaleX(1.045); transform-origin: calc(0*var(--u)) 50%;">Branch Network VPN</h3><p class="t csub" style="left: calc(145.1*var(--u)); top: calc(144*var(--u)); font-size: calc(26.4*var(--u)); line-height: calc(34*var(--u)); color: rgb(156, 163, 175); font-weight: 400; transform: scaleX(1.039); transform-origin: calc(0*var(--u)) 50%;">Tier 1 <span class="d">—</span> Internal</p><div class="row"><span class="t lab" style="left: calc(47.3*var(--u)); top: calc(239.3*var(--u)); font-size: calc(26.2*var(--u)); line-height: calc(34*var(--u)); color: rgb(156, 163, 175); font-weight: 400; transform: scaleX(1.095); transform-origin: calc(0*var(--u)) 50%;">Owner:</span><span class="t val" style="right: calc(46.6*var(--u)); top: calc(239.3*var(--u)); font-size: calc(26.2*var(--u)); line-height: calc(34*var(--u)); color: rgb(229, 229, 229); font-weight: 400; transform: scaleX(1.075); transform-origin: 100% 50%;">Kevin O'Brien</span><i class="div" style="top:calc(292*var(--u))"></i></div><div class="row"><span class="t lab" style="left: calc(47.3*var(--u)); top: calc(328.3*var(--u)); font-size: calc(26.2*var(--u)); line-height: calc(34*var(--u)); color: rgb(156, 163, 175); font-weight: 400; transform: scaleX(1.138); transform-origin: calc(0*var(--u)) 50%;">Certificates:</span><span class="t val" style="right: calc(76.8*var(--u)); top: calc(328.3*var(--u)); font-size: calc(26.2*var(--u)); line-height: calc(34*var(--u)); color: rgb(229, 229, 229); font-weight: 400; transform: scaleX(1.084); transform-origin: 100% 50%;">1 cert (RSA-2048)</span><svg class="chk" viewBox="0 0 20.4 19.2" style="left:calc(763*var(--u));top:calc(335.1*var(--u))"><path d="M0 11.3 L3 8.8 L6.5 13.2 C10.2 7.6 15 2.7 20.4 0 L20.4 2.1 C15.6 6.4 11.2 12.4 8 19.2 L5.2 19.2 Z" fill="#e5e5e5"></path><title>✓</title></svg><i class="div" style="top:calc(381*var(--u))"></i></div><div class="row"><span class="t lab" style="left: calc(46.2*var(--u)); top: calc(417.3*var(--u)); font-size: calc(26.2*var(--u)); line-height: calc(34*var(--u)); color: rgb(156, 163, 175); font-weight: 400; transform: scaleX(1.111); transform-origin: calc(0*var(--u)) 50%;">Protocols:</span><span class="t val" style="right: calc(47.7*var(--u)); top: calc(417.3*var(--u)); font-size: calc(26.2*var(--u)); line-height: calc(34*var(--u)); color: rgb(229, 229, 229); font-weight: 400; transform: scaleX(0.985); transform-origin: 100% 50%;">IPSec IKEv2</span><i class="div" style="top:calc(470*var(--u))"></i></div><div class="row"><span class="t lab" style="left: calc(48.4*var(--u)); top: calc(506.3*var(--u)); font-size: calc(26.2*var(--u)); line-height: calc(34*var(--u)); color: rgb(156, 163, 175); font-weight: 400; transform: scaleX(1.055); transform-origin: calc(0*var(--u)) 50%;">Assets:</span><span class="t val" style="right: calc(48.2*var(--u)); top: calc(506.3*var(--u)); font-size: calc(26.2*var(--u)); line-height: calc(34*var(--u)); color: rgb(229, 229, 229); font-weight: 400; transform: scaleX(1.094); transform-origin: 100% 50%;">1 crypto assets</span><i class="div" style="top:calc(559*var(--u))"></i></div></article>
</section></main><div class="frame1"></div><div class="frame2"></div></div></body></html>
